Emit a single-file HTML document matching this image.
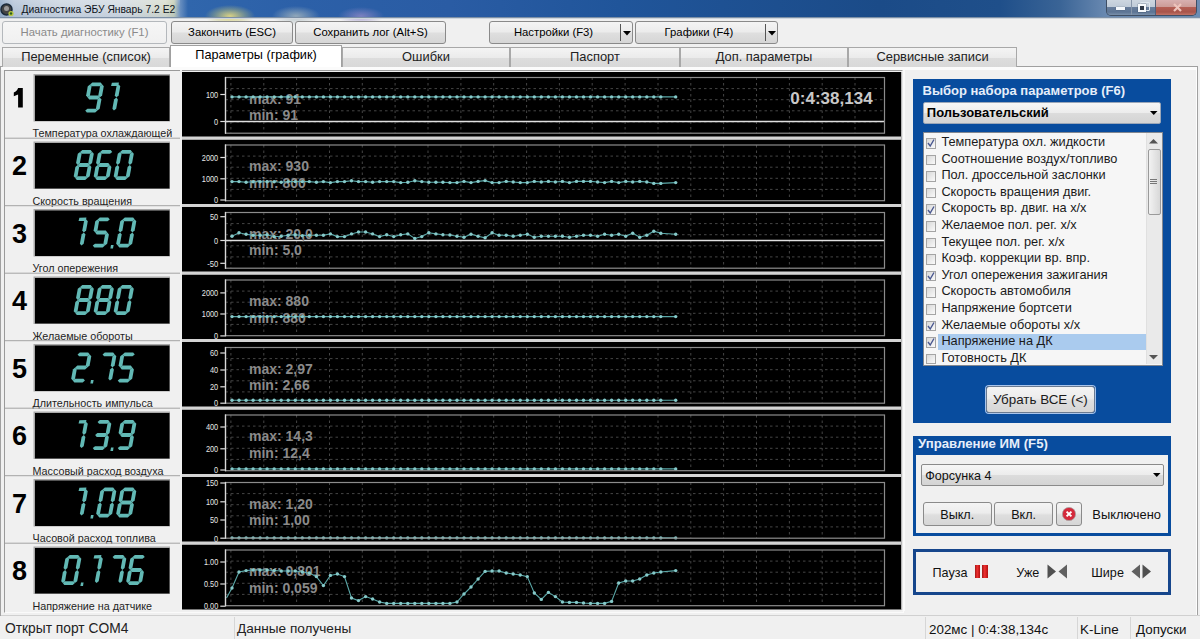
<!DOCTYPE html><html><head><meta charset="utf-8"><style>
html,body{margin:0;padding:0;}
body{width:1200px;height:639px;position:relative;overflow:hidden;background:#f0f0f0;font-family:"Liberation Sans",sans-serif;}
.b{position:absolute;box-sizing:content-box;}
.t{position:absolute;white-space:nowrap;}
</style></head><body>
<div class="b" style="left:0;top:0;width:1200px;height:18px;background:linear-gradient(90deg,#93acc9 0px,#b9c8da 14px,#cdd7e2 60px,#d5dde5 120px,#dadfd0 165px,#c8d0b8 174px,#6a90c0 180px,#3066ac 188px,#2c60a8 300px,#2a5ca4 450px,#20559a 620px,#1b4b88 880px,#1f4f8a 1000px,#3a6496 1060px,#6888b0 1105px,#6c8cb2 1200px);"></div>
<div class="b" style="left:0;top:0;width:180px;height:18px;background:linear-gradient(rgba(255,255,255,0.15),rgba(255,255,255,0) 40%,rgba(140,160,190,0.25));"></div>
<div class="b" style="left:205px;top:5px;width:50px;height:22px;background:radial-gradient(ellipse closest-side,rgba(225,215,130,0.95),rgba(200,200,120,0.4) 60%,rgba(200,200,120,0) 100%);"></div>
<div class="b" style="left:272px;top:6px;width:48px;height:20px;background:radial-gradient(ellipse closest-side,rgba(170,185,190,0.8),rgba(160,175,185,0) 100%);"></div>
<div class="b" style="left:338px;top:7px;width:46px;height:18px;background:radial-gradient(ellipse closest-side,rgba(150,140,200,0.75),rgba(150,140,200,0) 100%);"></div>
<div class="b" style="left:0;top:17px;width:1200px;height:1px;background:#7d90a6;"></div>
<div class="b" style="left:0;top:18px;width:1200px;height:1px;background:#cfd6de;"></div>
<svg class="b" style="left:0;top:3px" width="16" height="14"><circle cx="6.5" cy="6.5" r="5.5" fill="#444" stroke="#1a2a3a" stroke-width="1.5"/><circle cx="6.5" cy="5.5" r="2.5" fill="#9a9a9a"/><circle cx="11" cy="10.5" r="2.6" fill="#b8c840"/><circle cx="11" cy="10.5" r="1.2" fill="#2e5e20"/></svg>
<div class="t" style="left:21.5px;top:5.18px;font-size:10.3px;line-height:10.3px;color:#0c121a;font-weight:normal;">Диагностика ЭБУ Январь 7.2 E2</div>
<div class="b" style="left:1106px;top:0;width:89px;height:15px;border:1px solid #3e4e64;border-top:none;border-radius:0 0 5px 5px;overflow:hidden;background:#6080a0">
<div class="b" style="left:0;top:0;width:24px;height:15px;background:linear-gradient(#cdd6e0 0,#bfcbd8 45%,#687e9c 50%,#5c7494 80%,#7a90aa 100%);border-right:1px solid #8796aa"></div>
<div class="b" style="left:25px;top:0;width:23px;height:15px;background:linear-gradient(#cdd6e0 0,#bfcbd8 45%,#687e9c 50%,#5c7494 80%,#7a90aa 100%);border-right:1px solid #50607a"></div>
<div class="b" style="left:49px;top:0;width:40px;height:15px;background:linear-gradient(#d8b0b0 0,#cc9c98 45%,#b45e54 50%,#a8544a 80%,#c07468 100%);"></div>
<div class="b" style="left:9px;top:7px;width:9px;height:3px;background:#f4f8fc;box-shadow:0 0 1px #203040"></div>
<div class="b" style="left:33px;top:2px;width:8px;height:7px;border:1px solid #dde6ee;border-radius:1px"></div>
<div class="b" style="left:31px;top:4px;width:4px;height:4px;border:2px solid #f6f9fc;background:#303a48;box-shadow:0 0 1px #203040"></div>
<svg class="b" style="left:66px;top:3px" width="9" height="9"><path d="M1 1L8 8M8 1L1 8" stroke="#eec4bc" stroke-width="2.2"/></svg>
</div>
<div class="b" style="left:2px;top:21px;width:163px;height:21px;border-radius:3px;border:1px solid #b4b8bc;background:linear-gradient(#f6f6f6,#f0f0f0);"></div>
<div class="t" style="left:2px;top:25.7px;width:165px;text-align:center;font-size:11.3px;line-height:13.0px;color:#8a8a8a">Начать диагностику (F1)</div>
<div class="b" style="left:171px;top:21px;width:120px;height:21px;border-radius:3px;border:1px solid #8a8a8a;background:linear-gradient(#f4f4f4 0,#ececec 45%,#dedede 55%,#d6d6d6 100%);"></div>
<div class="t" style="left:171px;top:25.7px;width:122px;text-align:center;font-size:11.3px;line-height:13.0px;color:#000">Закончить (ESC)</div>
<div class="b" style="left:295px;top:21px;width:149px;height:21px;border-radius:3px;border:1px solid #8a8a8a;background:linear-gradient(#f4f4f4 0,#ececec 45%,#dedede 55%,#d6d6d6 100%);"></div>
<div class="t" style="left:295px;top:25.7px;width:151px;text-align:center;font-size:11.3px;line-height:13.0px;color:#000">Сохранить лог (Alt+S)</div>
<div class="b" style="left:489px;top:21px;width:142px;height:21px;border-radius:3px;border:1px solid #8a8a8a;background:linear-gradient(#f4f4f4 0,#ececec 45%,#dedede 55%,#d6d6d6 100%);"></div>
<div class="t" style="left:489px;top:25.7px;width:129px;text-align:center;font-size:11.3px;line-height:13.0px;color:#000">Настройки (F3)</div>
<div class="b" style="left:620px;top:24px;width:1px;height:17px;background:#555"></div>
<svg class="b" style="left:623px;top:30.5px" width="8" height="5"><path d="M0 0H8L4 4.5Z" fill="#000"/></svg>
<div class="b" style="left:635px;top:21px;width:141px;height:21px;border-radius:3px;border:1px solid #8a8a8a;background:linear-gradient(#f4f4f4 0,#ececec 45%,#dedede 55%,#d6d6d6 100%);"></div>
<div class="t" style="left:635px;top:25.7px;width:128px;text-align:center;font-size:11.3px;line-height:13.0px;color:#000">Графики (F4)</div>
<div class="b" style="left:765px;top:24px;width:1px;height:17px;background:#555"></div>
<svg class="b" style="left:768px;top:30.5px" width="8" height="5"><path d="M0 0H8L4 4.5Z" fill="#000"/></svg>
<div class="b" style="left:0;top:66px;width:1196px;height:548px;border:1px solid #a0a0a0;background:#fdfdfd;"></div>
<div class="b" style="left:2px;top:47px;width:166px;height:19px;border:1px solid #a8a8a8;border-bottom:none;background:linear-gradient(#f4f4f4 0,#ebebeb 50%,#dddddd 51%,#d8d8d8 100%);"></div>
<div class="t" style="left:2px;top:49px;width:168px;text-align:center;font-size:12.9px;line-height:15px;color:#222">Переменные (список)</div>
<div class="b" style="left:170px;top:45px;width:170px;height:23px;border:1px solid #a0a0a0;border-bottom:none;background:#fff;"></div>
<div class="t" style="left:170px;top:48px;width:172px;text-align:center;font-size:12.7px;line-height:15px;color:#000">Параметры (график)</div>
<div class="b" style="left:342px;top:47px;width:166px;height:19px;border:1px solid #a8a8a8;border-bottom:none;background:linear-gradient(#f4f4f4 0,#ebebeb 50%,#dddddd 51%,#d8d8d8 100%);"></div>
<div class="t" style="left:342px;top:49px;width:168px;text-align:center;font-size:12.9px;line-height:15px;color:#222">Ошибки</div>
<div class="b" style="left:510px;top:47px;width:168px;height:19px;border:1px solid #a8a8a8;border-bottom:none;background:linear-gradient(#f4f4f4 0,#ebebeb 50%,#dddddd 51%,#d8d8d8 100%);"></div>
<div class="t" style="left:510px;top:49px;width:170px;text-align:center;font-size:12.9px;line-height:15px;color:#222">Паспорт</div>
<div class="b" style="left:680px;top:47px;width:166px;height:19px;border:1px solid #a8a8a8;border-bottom:none;background:linear-gradient(#f4f4f4 0,#ebebeb 50%,#dddddd 51%,#d8d8d8 100%);"></div>
<div class="t" style="left:680px;top:49px;width:168px;text-align:center;font-size:12.9px;line-height:15px;color:#222">Доп. параметры</div>
<div class="b" style="left:848px;top:47px;width:167px;height:19px;border:1px solid #a8a8a8;border-bottom:none;background:linear-gradient(#f4f4f4 0,#ebebeb 50%,#dddddd 51%,#d8d8d8 100%);"></div>
<div class="t" style="left:848px;top:49px;width:169px;text-align:center;font-size:12.9px;line-height:15px;color:#222">Сервисные записи</div>
<div class="b" style="left:1px;top:67px;width:1195px;height:547px;background:#f0f0f0;border-top:3px solid #fbfbfb;"></div>
<div class="b" style="left:4px;top:70px;width:898px;height:541px;border-top:1px solid #9a9a9a;border-left:1px solid #9a9a9a;border-right:1px solid #fafafa;border-bottom:1px solid #fafafa;background:#f0f0f0;"></div>
<svg class="b" style="left:0;top:0" width="1200" height="639" font-family="Liberation Sans, sans-serif"><path d="M18.1,87.9 H22.8 V107.6 H18.1 V94.6 L13.8,96.2 V92.6 C16,91.6 17.4,90 18.1,87.9 Z" fill="#000"/><rect x="33.5" y="74.0" width="136.5" height="47.5" fill="#a8a8a8"/><rect x="35" y="75.5" width="134.5" height="45.5" fill="#000"/><polygon points="90.04,84.40 92.29,82.50 100.69,82.50 102.24,84.40 99.99,86.30 91.59,86.30" fill="#62b9b5"/><polygon points="102.24,84.40 103.79,86.30 102.09,95.60 99.84,97.50 98.29,95.60 99.99,86.30" fill="#62b9b5"/><polygon points="99.84,97.50 101.40,99.40 99.70,108.70 97.45,110.60 95.90,108.70 97.60,99.40" fill="#62b9b5"/><polygon points="85.25,110.60 87.50,108.70 95.90,108.70 97.45,110.60 95.20,112.50 86.80,112.50" fill="#62b9b5"/><polygon points="90.04,84.40 91.59,86.30 89.89,95.60 87.65,97.50 86.09,95.60 87.79,86.30" fill="#62b9b5"/><polygon points="87.65,97.50 89.89,95.60 98.29,95.60 99.84,97.50 97.60,99.40 89.20,99.40" fill="#62b9b5"/><polygon points="118.74,84.40 120.29,86.30 118.59,95.60 116.34,97.50 114.79,95.60 116.49,86.30" fill="#62b9b5"/><polygon points="116.34,97.50 117.90,99.40 116.20,108.70 113.95,110.60 112.40,108.70 114.10,99.40" fill="#62b9b5"/><polygon points="111.9,82.8 118.9,82.5 118.4,85.9 111.1,86.1" fill="#62b9b5"/><text x="32.5" y="137.0" font-size="10.75" fill="#1e1e1e">Температура охлаждающей</text><rect x="182" y="72.0" width="719" height="65" fill="#000"/><rect x="5" y="137.7" width="177" height="1" fill="#a4a4a4"/><text x="19.5" y="175.3" text-anchor="middle" font-size="27" font-weight="bold" fill="#000">2</text><rect x="33.5" y="141.5" width="136.5" height="47.5" fill="#a8a8a8"/><rect x="35" y="143.0" width="134.5" height="45.5" fill="#000"/><polygon points="80.04,151.90 82.29,150.00 90.69,150.00 92.24,151.90 89.99,153.80 81.59,153.80" fill="#62b9b5"/><polygon points="92.24,151.90 93.79,153.80 92.09,163.10 89.84,165.00 88.29,163.10 89.99,153.80" fill="#62b9b5"/><polygon points="89.84,165.00 91.40,166.90 89.70,176.20 87.45,178.10 85.90,176.20 87.60,166.90" fill="#62b9b5"/><polygon points="75.25,178.10 77.50,176.20 85.90,176.20 87.45,178.10 85.20,180.00 76.80,180.00" fill="#62b9b5"/><polygon points="77.65,165.00 79.20,166.90 77.50,176.20 75.25,178.10 73.70,176.20 75.40,166.90" fill="#62b9b5"/><polygon points="80.04,151.90 81.59,153.80 79.89,163.10 77.65,165.00 76.09,163.10 77.79,153.80" fill="#62b9b5"/><polygon points="77.65,165.00 79.89,163.10 88.29,163.10 89.84,165.00 87.60,166.90 79.20,166.90" fill="#62b9b5"/><polygon points="100.04,151.90 102.29,150.00 110.69,150.00 112.24,151.90 109.99,153.80 101.59,153.80" fill="#62b9b5"/><polygon points="100.04,151.90 101.59,153.80 99.89,163.10 97.65,165.00 96.09,163.10 97.79,153.80" fill="#62b9b5"/><polygon points="97.65,165.00 99.89,163.10 108.29,163.10 109.84,165.00 107.60,166.90 99.20,166.90" fill="#62b9b5"/><polygon points="97.65,165.00 99.20,166.90 97.50,176.20 95.25,178.10 93.70,176.20 95.40,166.90" fill="#62b9b5"/><polygon points="95.25,178.10 97.50,176.20 105.90,176.20 107.45,178.10 105.20,180.00 96.80,180.00" fill="#62b9b5"/><polygon points="109.84,165.00 111.40,166.90 109.70,176.20 107.45,178.10 105.90,176.20 107.60,166.90" fill="#62b9b5"/><polygon points="120.04,151.90 122.29,150.00 130.69,150.00 132.24,151.90 129.99,153.80 121.59,153.80" fill="#62b9b5"/><polygon points="132.24,151.90 133.79,153.80 132.09,163.10 129.84,165.00 128.29,163.10 129.99,153.80" fill="#62b9b5"/><polygon points="129.84,165.00 131.40,166.90 129.70,176.20 127.45,178.10 125.90,176.20 127.60,166.90" fill="#62b9b5"/><polygon points="115.25,178.10 117.50,176.20 125.90,176.20 127.45,178.10 125.20,180.00 116.80,180.00" fill="#62b9b5"/><polygon points="117.65,165.00 119.20,166.90 117.50,176.20 115.25,178.10 113.70,176.20 115.40,166.90" fill="#62b9b5"/><polygon points="120.04,151.90 121.59,153.80 119.89,163.10 117.65,165.00 116.09,163.10 117.79,153.80" fill="#62b9b5"/><text x="32.5" y="204.5" font-size="10.75" fill="#1e1e1e">Скорость вращения</text><rect x="182" y="139.5" width="719" height="65" fill="#000"/><rect x="5" y="205.2" width="177" height="1" fill="#a4a4a4"/><text x="19.5" y="242.8" text-anchor="middle" font-size="27" font-weight="bold" fill="#000">3</text><rect x="33.5" y="209.0" width="136.5" height="47.5" fill="#a8a8a8"/><rect x="35" y="210.5" width="134.5" height="45.5" fill="#000"/><polygon points="86.24,219.40 87.79,221.30 86.09,230.60 83.84,232.50 82.29,230.60 83.99,221.30" fill="#62b9b5"/><polygon points="83.84,232.50 85.40,234.40 83.70,243.70 81.45,245.60 79.90,243.70 81.60,234.40" fill="#62b9b5"/><polygon points="79.4,217.8 86.4,217.5 85.9,220.9 78.6,221.1" fill="#62b9b5"/><polygon points="97.54,219.40 99.79,217.50 108.19,217.50 109.74,219.40 107.49,221.30 99.09,221.30" fill="#62b9b5"/><polygon points="97.54,219.40 99.09,221.30 97.39,230.60 95.15,232.50 93.59,230.60 95.29,221.30" fill="#62b9b5"/><polygon points="95.15,232.50 97.39,230.60 105.79,230.60 107.34,232.50 105.10,234.40 96.70,234.40" fill="#62b9b5"/><polygon points="107.34,232.50 108.90,234.40 107.20,243.70 104.95,245.60 103.40,243.70 105.10,234.40" fill="#62b9b5"/><polygon points="92.75,245.60 95.00,243.70 103.40,243.70 104.95,245.60 102.70,247.50 94.30,247.50" fill="#62b9b5"/><polygon points="111.0,245.0 113.6,245.0 113.0,248.5 110.4,248.5" fill="#62b9b5"/><polygon points="122.54,219.40 124.79,217.50 133.19,217.50 134.74,219.40 132.49,221.30 124.09,221.30" fill="#62b9b5"/><polygon points="134.74,219.40 136.29,221.30 134.59,230.60 132.34,232.50 130.79,230.60 132.49,221.30" fill="#62b9b5"/><polygon points="132.34,232.50 133.90,234.40 132.20,243.70 129.95,245.60 128.40,243.70 130.10,234.40" fill="#62b9b5"/><polygon points="117.75,245.60 120.00,243.70 128.40,243.70 129.95,245.60 127.70,247.50 119.30,247.50" fill="#62b9b5"/><polygon points="120.15,232.50 121.70,234.40 120.00,243.70 117.75,245.60 116.20,243.70 117.90,234.40" fill="#62b9b5"/><polygon points="122.54,219.40 124.09,221.30 122.39,230.60 120.15,232.50 118.59,230.60 120.29,221.30" fill="#62b9b5"/><text x="32.5" y="272.0" font-size="10.75" fill="#1e1e1e">Угол опережения</text><rect x="182" y="207.0" width="719" height="65" fill="#000"/><rect x="5" y="272.7" width="177" height="1" fill="#a4a4a4"/><text x="19.5" y="310.3" text-anchor="middle" font-size="27" font-weight="bold" fill="#000">4</text><rect x="33.5" y="276.5" width="136.5" height="47.5" fill="#a8a8a8"/><rect x="35" y="278.0" width="134.5" height="45.5" fill="#000"/><polygon points="80.04,286.90 82.29,285.00 90.69,285.00 92.24,286.90 89.99,288.80 81.59,288.80" fill="#62b9b5"/><polygon points="92.24,286.90 93.79,288.80 92.09,298.10 89.84,300.00 88.29,298.10 89.99,288.80" fill="#62b9b5"/><polygon points="89.84,300.00 91.40,301.90 89.70,311.20 87.45,313.10 85.90,311.20 87.60,301.90" fill="#62b9b5"/><polygon points="75.25,313.10 77.50,311.20 85.90,311.20 87.45,313.10 85.20,315.00 76.80,315.00" fill="#62b9b5"/><polygon points="77.65,300.00 79.20,301.90 77.50,311.20 75.25,313.10 73.70,311.20 75.40,301.90" fill="#62b9b5"/><polygon points="80.04,286.90 81.59,288.80 79.89,298.10 77.65,300.00 76.09,298.10 77.79,288.80" fill="#62b9b5"/><polygon points="77.65,300.00 79.89,298.10 88.29,298.10 89.84,300.00 87.60,301.90 79.20,301.90" fill="#62b9b5"/><polygon points="100.04,286.90 102.29,285.00 110.69,285.00 112.24,286.90 109.99,288.80 101.59,288.80" fill="#62b9b5"/><polygon points="112.24,286.90 113.79,288.80 112.09,298.10 109.84,300.00 108.29,298.10 109.99,288.80" fill="#62b9b5"/><polygon points="109.84,300.00 111.40,301.90 109.70,311.20 107.45,313.10 105.90,311.20 107.60,301.90" fill="#62b9b5"/><polygon points="95.25,313.10 97.50,311.20 105.90,311.20 107.45,313.10 105.20,315.00 96.80,315.00" fill="#62b9b5"/><polygon points="97.65,300.00 99.20,301.90 97.50,311.20 95.25,313.10 93.70,311.20 95.40,301.90" fill="#62b9b5"/><polygon points="100.04,286.90 101.59,288.80 99.89,298.10 97.65,300.00 96.09,298.10 97.79,288.80" fill="#62b9b5"/><polygon points="97.65,300.00 99.89,298.10 108.29,298.10 109.84,300.00 107.60,301.90 99.20,301.90" fill="#62b9b5"/><polygon points="120.04,286.90 122.29,285.00 130.69,285.00 132.24,286.90 129.99,288.80 121.59,288.80" fill="#62b9b5"/><polygon points="132.24,286.90 133.79,288.80 132.09,298.10 129.84,300.00 128.29,298.10 129.99,288.80" fill="#62b9b5"/><polygon points="129.84,300.00 131.40,301.90 129.70,311.20 127.45,313.10 125.90,311.20 127.60,301.90" fill="#62b9b5"/><polygon points="115.25,313.10 117.50,311.20 125.90,311.20 127.45,313.10 125.20,315.00 116.80,315.00" fill="#62b9b5"/><polygon points="117.65,300.00 119.20,301.90 117.50,311.20 115.25,313.10 113.70,311.20 115.40,301.90" fill="#62b9b5"/><polygon points="120.04,286.90 121.59,288.80 119.89,298.10 117.65,300.00 116.09,298.10 117.79,288.80" fill="#62b9b5"/><text x="32.5" y="339.5" font-size="10.75" fill="#1e1e1e">Желаемые обороты</text><rect x="182" y="274.5" width="719" height="65" fill="#000"/><rect x="5" y="340.2" width="177" height="1" fill="#a4a4a4"/><text x="19.5" y="377.8" text-anchor="middle" font-size="27" font-weight="bold" fill="#000">5</text><rect x="33.5" y="344.0" width="136.5" height="47.5" fill="#a8a8a8"/><rect x="35" y="345.5" width="134.5" height="45.5" fill="#000"/><polygon points="77.54,354.40 79.79,352.50 88.19,352.50 89.74,354.40 87.49,356.30 79.09,356.30" fill="#62b9b5"/><polygon points="89.74,354.40 91.29,356.30 89.59,365.60 87.34,367.50 85.79,365.60 87.49,356.30" fill="#62b9b5"/><polygon points="75.15,367.50 77.39,365.60 85.79,365.60 87.34,367.50 85.10,369.40 76.70,369.40" fill="#62b9b5"/><polygon points="75.15,367.50 76.70,369.40 75.00,378.70 72.75,380.60 71.20,378.70 72.90,369.40" fill="#62b9b5"/><polygon points="72.75,380.60 75.00,378.70 83.40,378.70 84.95,380.60 82.70,382.50 74.30,382.50" fill="#62b9b5"/><polygon points="91.0,380.0 93.6,380.0 93.0,383.5 90.4,383.5" fill="#62b9b5"/><polygon points="102.54,354.40 104.79,352.50 113.19,352.50 114.74,354.40 112.49,356.30 104.09,356.30" fill="#62b9b5"/><polygon points="114.74,354.40 116.29,356.30 114.59,365.60 112.34,367.50 110.79,365.60 112.49,356.30" fill="#62b9b5"/><polygon points="112.34,367.50 113.90,369.40 112.20,378.70 109.95,380.60 108.40,378.70 110.10,369.40" fill="#62b9b5"/><polygon points="122.54,354.40 124.79,352.50 133.19,352.50 134.74,354.40 132.49,356.30 124.09,356.30" fill="#62b9b5"/><polygon points="122.54,354.40 124.09,356.30 122.39,365.60 120.15,367.50 118.59,365.60 120.29,356.30" fill="#62b9b5"/><polygon points="120.15,367.50 122.39,365.60 130.79,365.60 132.34,367.50 130.10,369.40 121.70,369.40" fill="#62b9b5"/><polygon points="132.34,367.50 133.90,369.40 132.20,378.70 129.95,380.60 128.40,378.70 130.10,369.40" fill="#62b9b5"/><polygon points="117.75,380.60 120.00,378.70 128.40,378.70 129.95,380.60 127.70,382.50 119.30,382.50" fill="#62b9b5"/><text x="32.5" y="407.0" font-size="10.75" fill="#1e1e1e">Длительность импульса</text><rect x="182" y="342.0" width="719" height="65" fill="#000"/><rect x="5" y="407.7" width="177" height="1" fill="#a4a4a4"/><text x="19.5" y="445.3" text-anchor="middle" font-size="27" font-weight="bold" fill="#000">6</text><rect x="33.5" y="411.5" width="136.5" height="47.5" fill="#a8a8a8"/><rect x="35" y="413.0" width="134.5" height="45.5" fill="#000"/><polygon points="86.24,421.90 87.79,423.80 86.09,433.10 83.84,435.00 82.29,433.10 83.99,423.80" fill="#62b9b5"/><polygon points="83.84,435.00 85.40,436.90 83.70,446.20 81.45,448.10 79.90,446.20 81.60,436.90" fill="#62b9b5"/><polygon points="79.4,420.3 86.4,420.0 85.9,423.4 78.6,423.6" fill="#62b9b5"/><polygon points="97.54,421.90 99.79,420.00 108.19,420.00 109.74,421.90 107.49,423.80 99.09,423.80" fill="#62b9b5"/><polygon points="109.74,421.90 111.29,423.80 109.59,433.10 107.34,435.00 105.79,433.10 107.49,423.80" fill="#62b9b5"/><polygon points="95.15,435.00 97.39,433.10 105.79,433.10 107.34,435.00 105.10,436.90 96.70,436.90" fill="#62b9b5"/><polygon points="107.34,435.00 108.90,436.90 107.20,446.20 104.95,448.10 103.40,446.20 105.10,436.90" fill="#62b9b5"/><polygon points="92.75,448.10 95.00,446.20 103.40,446.20 104.95,448.10 102.70,450.00 94.30,450.00" fill="#62b9b5"/><polygon points="111.0,447.5 113.6,447.5 113.0,451.0 110.4,451.0" fill="#62b9b5"/><polygon points="122.54,421.90 124.79,420.00 133.19,420.00 134.74,421.90 132.49,423.80 124.09,423.80" fill="#62b9b5"/><polygon points="134.74,421.90 136.29,423.80 134.59,433.10 132.34,435.00 130.79,433.10 132.49,423.80" fill="#62b9b5"/><polygon points="132.34,435.00 133.90,436.90 132.20,446.20 129.95,448.10 128.40,446.20 130.10,436.90" fill="#62b9b5"/><polygon points="117.75,448.10 120.00,446.20 128.40,446.20 129.95,448.10 127.70,450.00 119.30,450.00" fill="#62b9b5"/><polygon points="122.54,421.90 124.09,423.80 122.39,433.10 120.15,435.00 118.59,433.10 120.29,423.80" fill="#62b9b5"/><polygon points="120.15,435.00 122.39,433.10 130.79,433.10 132.34,435.00 130.10,436.90 121.70,436.90" fill="#62b9b5"/><text x="32.5" y="474.5" font-size="10.75" fill="#1e1e1e">Массовый расход воздуха</text><rect x="182" y="409.5" width="719" height="65" fill="#000"/><rect x="5" y="475.2" width="177" height="1" fill="#a4a4a4"/><text x="19.5" y="512.8" text-anchor="middle" font-size="27" font-weight="bold" fill="#000">7</text><rect x="33.5" y="479.0" width="136.5" height="47.5" fill="#a8a8a8"/><rect x="35" y="480.5" width="134.5" height="45.5" fill="#000"/><polygon points="86.24,489.40 87.79,491.30 86.09,500.60 83.84,502.50 82.29,500.60 83.99,491.30" fill="#62b9b5"/><polygon points="83.84,502.50 85.40,504.40 83.70,513.70 81.45,515.60 79.90,513.70 81.60,504.40" fill="#62b9b5"/><polygon points="79.4,487.8 86.4,487.5 85.9,490.9 78.6,491.1" fill="#62b9b5"/><polygon points="91.0,515.0 93.6,515.0 93.0,518.5 90.4,518.5" fill="#62b9b5"/><polygon points="102.54,489.40 104.79,487.50 113.19,487.50 114.74,489.40 112.49,491.30 104.09,491.30" fill="#62b9b5"/><polygon points="114.74,489.40 116.29,491.30 114.59,500.60 112.34,502.50 110.79,500.60 112.49,491.30" fill="#62b9b5"/><polygon points="112.34,502.50 113.90,504.40 112.20,513.70 109.95,515.60 108.40,513.70 110.10,504.40" fill="#62b9b5"/><polygon points="97.75,515.60 100.00,513.70 108.40,513.70 109.95,515.60 107.70,517.50 99.30,517.50" fill="#62b9b5"/><polygon points="100.15,502.50 101.70,504.40 100.00,513.70 97.75,515.60 96.20,513.70 97.90,504.40" fill="#62b9b5"/><polygon points="102.54,489.40 104.09,491.30 102.39,500.60 100.15,502.50 98.59,500.60 100.29,491.30" fill="#62b9b5"/><polygon points="122.54,489.40 124.79,487.50 133.19,487.50 134.74,489.40 132.49,491.30 124.09,491.30" fill="#62b9b5"/><polygon points="134.74,489.40 136.29,491.30 134.59,500.60 132.34,502.50 130.79,500.60 132.49,491.30" fill="#62b9b5"/><polygon points="132.34,502.50 133.90,504.40 132.20,513.70 129.95,515.60 128.40,513.70 130.10,504.40" fill="#62b9b5"/><polygon points="117.75,515.60 120.00,513.70 128.40,513.70 129.95,515.60 127.70,517.50 119.30,517.50" fill="#62b9b5"/><polygon points="120.15,502.50 121.70,504.40 120.00,513.70 117.75,515.60 116.20,513.70 117.90,504.40" fill="#62b9b5"/><polygon points="122.54,489.40 124.09,491.30 122.39,500.60 120.15,502.50 118.59,500.60 120.29,491.30" fill="#62b9b5"/><polygon points="120.15,502.50 122.39,500.60 130.79,500.60 132.34,502.50 130.10,504.40 121.70,504.40" fill="#62b9b5"/><text x="32.5" y="542.0" font-size="10.75" fill="#1e1e1e">Часовой расход топлива</text><rect x="182" y="477.0" width="719" height="65" fill="#000"/><rect x="5" y="542.7" width="177" height="1" fill="#a4a4a4"/><text x="19.5" y="580.3" text-anchor="middle" font-size="27" font-weight="bold" fill="#000">8</text><rect x="33.5" y="546.5" width="136.5" height="47.5" fill="#a8a8a8"/><rect x="35" y="548.0" width="134.5" height="45.5" fill="#000"/><polygon points="67.54,556.90 69.79,555.00 78.19,555.00 79.74,556.90 77.49,558.80 69.09,558.80" fill="#62b9b5"/><polygon points="79.74,556.90 81.29,558.80 79.59,568.10 77.34,570.00 75.79,568.10 77.49,558.80" fill="#62b9b5"/><polygon points="77.34,570.00 78.90,571.90 77.20,581.20 74.95,583.10 73.40,581.20 75.10,571.90" fill="#62b9b5"/><polygon points="62.75,583.10 65.00,581.20 73.40,581.20 74.95,583.10 72.70,585.00 64.30,585.00" fill="#62b9b5"/><polygon points="65.14,570.00 66.70,571.90 65.00,581.20 62.75,583.10 61.20,581.20 62.90,571.90" fill="#62b9b5"/><polygon points="67.54,556.90 69.09,558.80 67.39,568.10 65.14,570.00 63.59,568.10 65.29,558.80" fill="#62b9b5"/><polygon points="81.0,582.5 83.6,582.5 83.0,586.0 80.4,586.0" fill="#62b9b5"/><polygon points="101.24,556.90 102.79,558.80 101.09,568.10 98.84,570.00 97.29,568.10 98.99,558.80" fill="#62b9b5"/><polygon points="98.84,570.00 100.40,571.90 98.70,581.20 96.45,583.10 94.90,581.20 96.60,571.90" fill="#62b9b5"/><polygon points="94.4,555.3 101.4,555.0 100.9,558.4 93.6,558.6" fill="#62b9b5"/><polygon points="112.54,556.90 114.79,555.00 123.19,555.00 124.74,556.90 122.49,558.80 114.09,558.80" fill="#62b9b5"/><polygon points="124.74,556.90 126.29,558.80 124.59,568.10 122.34,570.00 120.79,568.10 122.49,558.80" fill="#62b9b5"/><polygon points="122.34,570.00 123.90,571.90 122.20,581.20 119.95,583.10 118.40,581.20 120.10,571.90" fill="#62b9b5"/><polygon points="132.54,556.90 134.79,555.00 143.19,555.00 144.74,556.90 142.49,558.80 134.09,558.80" fill="#62b9b5"/><polygon points="132.54,556.90 134.09,558.80 132.39,568.10 130.15,570.00 128.59,568.10 130.29,558.80" fill="#62b9b5"/><polygon points="130.15,570.00 132.39,568.10 140.79,568.10 142.34,570.00 140.10,571.90 131.70,571.90" fill="#62b9b5"/><polygon points="130.15,570.00 131.70,571.90 130.00,581.20 127.75,583.10 126.20,581.20 127.90,571.90" fill="#62b9b5"/><polygon points="127.75,583.10 130.00,581.20 138.40,581.20 139.95,583.10 137.70,585.00 129.30,585.00" fill="#62b9b5"/><polygon points="142.34,570.00 143.90,571.90 142.20,581.20 139.95,583.10 138.40,581.20 140.10,571.90" fill="#62b9b5"/><text x="32.5" y="609.5" font-size="10.75" fill="#1e1e1e">Напряжение на датчике</text><rect x="182" y="544.5" width="719" height="65" fill="#000"/><line x1="225.5" y1="88.6" x2="884.5" y2="88.6" stroke="#454545" stroke-width="1" stroke-dasharray="2.5,3"/><line x1="225.5" y1="99.7" x2="884.5" y2="99.7" stroke="#454545" stroke-width="1" stroke-dasharray="2.5,3"/><line x1="225.5" y1="110.8" x2="884.5" y2="110.8" stroke="#454545" stroke-width="1" stroke-dasharray="2.5,3"/><line x1="225.5" y1="121.9" x2="884.5" y2="121.9" stroke="#454545" stroke-width="1" stroke-dasharray="2.5,3"/><line x1="230.9" y1="77.5" x2="230.9" y2="133.2" stroke="#454545" stroke-width="1" stroke-dasharray="2.5,3"/><line x1="263.8" y1="77.5" x2="263.8" y2="133.2" stroke="#454545" stroke-width="1" stroke-dasharray="2.5,3"/><line x1="296.6" y1="77.5" x2="296.6" y2="133.2" stroke="#454545" stroke-width="1" stroke-dasharray="2.5,3"/><line x1="329.5" y1="77.5" x2="329.5" y2="133.2" stroke="#454545" stroke-width="1" stroke-dasharray="2.5,3"/><line x1="362.3" y1="77.5" x2="362.3" y2="133.2" stroke="#454545" stroke-width="1" stroke-dasharray="2.5,3"/><line x1="395.1" y1="77.5" x2="395.1" y2="133.2" stroke="#454545" stroke-width="1" stroke-dasharray="2.5,3"/><line x1="428.0" y1="77.5" x2="428.0" y2="133.2" stroke="#454545" stroke-width="1" stroke-dasharray="2.5,3"/><line x1="460.9" y1="77.5" x2="460.9" y2="133.2" stroke="#454545" stroke-width="1" stroke-dasharray="2.5,3"/><line x1="493.7" y1="77.5" x2="493.7" y2="133.2" stroke="#454545" stroke-width="1" stroke-dasharray="2.5,3"/><line x1="526.6" y1="77.5" x2="526.6" y2="133.2" stroke="#454545" stroke-width="1" stroke-dasharray="2.5,3"/><line x1="559.4" y1="77.5" x2="559.4" y2="133.2" stroke="#454545" stroke-width="1" stroke-dasharray="2.5,3"/><line x1="592.2" y1="77.5" x2="592.2" y2="133.2" stroke="#454545" stroke-width="1" stroke-dasharray="2.5,3"/><line x1="625.1" y1="77.5" x2="625.1" y2="133.2" stroke="#454545" stroke-width="1" stroke-dasharray="2.5,3"/><line x1="658.0" y1="77.5" x2="658.0" y2="133.2" stroke="#454545" stroke-width="1" stroke-dasharray="2.5,3"/><line x1="690.8" y1="77.5" x2="690.8" y2="133.2" stroke="#454545" stroke-width="1" stroke-dasharray="2.5,3"/><line x1="723.6" y1="77.5" x2="723.6" y2="133.2" stroke="#454545" stroke-width="1" stroke-dasharray="2.5,3"/><line x1="756.5" y1="77.5" x2="756.5" y2="133.2" stroke="#454545" stroke-width="1" stroke-dasharray="2.5,3"/><line x1="789.4" y1="77.5" x2="789.4" y2="133.2" stroke="#454545" stroke-width="1" stroke-dasharray="2.5,3"/><line x1="822.2" y1="77.5" x2="822.2" y2="133.2" stroke="#454545" stroke-width="1" stroke-dasharray="2.5,3"/><line x1="855.0" y1="77.5" x2="855.0" y2="133.2" stroke="#454545" stroke-width="1" stroke-dasharray="2.5,3"/><line x1="225.5" y1="121.5" x2="884.5" y2="121.5" stroke="#e0e0e0" stroke-width="1.3"/><line x1="220.3" y1="94.5" x2="225.5" y2="94.5" stroke="#e0e0e0" stroke-width="1.2"/><text x="205.9" y="97.7" font-size="8.6" fill="#e8e8e8" textLength="12.3" lengthAdjust="spacingAndGlyphs">100</text><line x1="220.3" y1="121.5" x2="225.5" y2="121.5" stroke="#e0e0e0" stroke-width="1.2"/><text x="214.1" y="124.7" font-size="8.6" fill="#e8e8e8" textLength="4.1" lengthAdjust="spacingAndGlyphs">0</text><text x="249" y="103.6" font-size="14" font-weight="bold" fill="#8a8a8a">max: 91</text><text x="249" y="120.4" font-size="14" font-weight="bold" fill="#8a8a8a">min: 91</text><polyline points="232.0,96.9 239.0,96.9 246.1,96.9 253.1,96.9 260.1,96.9 267.1,96.9 274.2,96.9 281.2,96.9 288.2,96.9 295.3,96.9 302.3,96.9 309.3,96.9 316.4,96.9 323.4,96.9 330.4,96.9 337.4,96.9 344.5,96.9 351.5,96.9 358.5,96.9 365.6,96.9 372.6,96.9 379.6,96.9 386.7,96.9 393.7,96.9 400.7,96.9 407.8,96.9 414.8,96.9 421.8,96.9 428.8,96.9 435.9,96.9 442.9,96.9 449.9,96.9 457.0,96.9 464.0,96.9 471.0,96.9 478.1,96.9 485.1,96.9 492.1,96.9 499.1,96.9 506.2,96.9 513.2,96.9 520.2,96.9 527.3,96.9 534.3,96.9 541.3,96.9 548.4,96.9 555.4,96.9 562.4,96.9 569.4,96.9 576.5,96.9 583.5,96.9 590.5,96.9 597.6,96.9 604.6,96.9 611.6,96.9 618.7,96.9 625.7,96.9 632.7,96.9 639.7,96.9 646.8,96.9 653.8,96.9 660.8,96.9 675.7,96.9" fill="none" stroke="#5aa8a8" stroke-width="1.1"/><circle cx="232.0" cy="96.9" r="1.7" fill="#86caca"/><circle cx="239.0" cy="96.9" r="1.7" fill="#86caca"/><circle cx="246.1" cy="96.9" r="1.7" fill="#86caca"/><circle cx="253.1" cy="96.9" r="1.7" fill="#86caca"/><circle cx="260.1" cy="96.9" r="1.7" fill="#86caca"/><circle cx="267.1" cy="96.9" r="1.7" fill="#86caca"/><circle cx="274.2" cy="96.9" r="1.7" fill="#86caca"/><circle cx="281.2" cy="96.9" r="1.7" fill="#86caca"/><circle cx="288.2" cy="96.9" r="1.7" fill="#86caca"/><circle cx="295.3" cy="96.9" r="1.7" fill="#86caca"/><circle cx="302.3" cy="96.9" r="1.7" fill="#86caca"/><circle cx="309.3" cy="96.9" r="1.7" fill="#86caca"/><circle cx="316.4" cy="96.9" r="1.7" fill="#86caca"/><circle cx="323.4" cy="96.9" r="1.7" fill="#86caca"/><circle cx="330.4" cy="96.9" r="1.7" fill="#86caca"/><circle cx="337.4" cy="96.9" r="1.7" fill="#86caca"/><circle cx="344.5" cy="96.9" r="1.7" fill="#86caca"/><circle cx="351.5" cy="96.9" r="1.7" fill="#86caca"/><circle cx="358.5" cy="96.9" r="1.7" fill="#86caca"/><circle cx="365.6" cy="96.9" r="1.7" fill="#86caca"/><circle cx="372.6" cy="96.9" r="1.7" fill="#86caca"/><circle cx="379.6" cy="96.9" r="1.7" fill="#86caca"/><circle cx="386.7" cy="96.9" r="1.7" fill="#86caca"/><circle cx="393.7" cy="96.9" r="1.7" fill="#86caca"/><circle cx="400.7" cy="96.9" r="1.7" fill="#86caca"/><circle cx="407.8" cy="96.9" r="1.7" fill="#86caca"/><circle cx="414.8" cy="96.9" r="1.7" fill="#86caca"/><circle cx="421.8" cy="96.9" r="1.7" fill="#86caca"/><circle cx="428.8" cy="96.9" r="1.7" fill="#86caca"/><circle cx="435.9" cy="96.9" r="1.7" fill="#86caca"/><circle cx="442.9" cy="96.9" r="1.7" fill="#86caca"/><circle cx="449.9" cy="96.9" r="1.7" fill="#86caca"/><circle cx="457.0" cy="96.9" r="1.7" fill="#86caca"/><circle cx="464.0" cy="96.9" r="1.7" fill="#86caca"/><circle cx="471.0" cy="96.9" r="1.7" fill="#86caca"/><circle cx="478.1" cy="96.9" r="1.7" fill="#86caca"/><circle cx="485.1" cy="96.9" r="1.7" fill="#86caca"/><circle cx="492.1" cy="96.9" r="1.7" fill="#86caca"/><circle cx="499.1" cy="96.9" r="1.7" fill="#86caca"/><circle cx="506.2" cy="96.9" r="1.7" fill="#86caca"/><circle cx="513.2" cy="96.9" r="1.7" fill="#86caca"/><circle cx="520.2" cy="96.9" r="1.7" fill="#86caca"/><circle cx="527.3" cy="96.9" r="1.7" fill="#86caca"/><circle cx="534.3" cy="96.9" r="1.7" fill="#86caca"/><circle cx="541.3" cy="96.9" r="1.7" fill="#86caca"/><circle cx="548.4" cy="96.9" r="1.7" fill="#86caca"/><circle cx="555.4" cy="96.9" r="1.7" fill="#86caca"/><circle cx="562.4" cy="96.9" r="1.7" fill="#86caca"/><circle cx="569.4" cy="96.9" r="1.7" fill="#86caca"/><circle cx="576.5" cy="96.9" r="1.7" fill="#86caca"/><circle cx="583.5" cy="96.9" r="1.7" fill="#86caca"/><circle cx="590.5" cy="96.9" r="1.7" fill="#86caca"/><circle cx="597.6" cy="96.9" r="1.7" fill="#86caca"/><circle cx="604.6" cy="96.9" r="1.7" fill="#86caca"/><circle cx="611.6" cy="96.9" r="1.7" fill="#86caca"/><circle cx="618.7" cy="96.9" r="1.7" fill="#86caca"/><circle cx="625.7" cy="96.9" r="1.7" fill="#86caca"/><circle cx="632.7" cy="96.9" r="1.7" fill="#86caca"/><circle cx="639.7" cy="96.9" r="1.7" fill="#86caca"/><circle cx="646.8" cy="96.9" r="1.7" fill="#86caca"/><circle cx="653.8" cy="96.9" r="1.7" fill="#86caca"/><circle cx="660.8" cy="96.9" r="1.7" fill="#86caca"/><circle cx="675.7" cy="96.9" r="1.7" fill="#86caca"/><rect x="225.5" y="77.5" width="659.0" height="55.7" fill="none" stroke="#8c8c8c" stroke-width="1.2"/><line x1="225.5" y1="76.9" x2="225.5" y2="133.79999999999998" stroke="#d8d8d8" stroke-width="1.3"/><line x1="225.5" y1="156.1" x2="884.5" y2="156.1" stroke="#454545" stroke-width="1" stroke-dasharray="2.5,3"/><line x1="225.5" y1="167.2" x2="884.5" y2="167.2" stroke="#454545" stroke-width="1" stroke-dasharray="2.5,3"/><line x1="225.5" y1="178.3" x2="884.5" y2="178.3" stroke="#454545" stroke-width="1" stroke-dasharray="2.5,3"/><line x1="225.5" y1="189.4" x2="884.5" y2="189.4" stroke="#454545" stroke-width="1" stroke-dasharray="2.5,3"/><line x1="230.9" y1="145.0" x2="230.9" y2="200.7" stroke="#454545" stroke-width="1" stroke-dasharray="2.5,3"/><line x1="263.8" y1="145.0" x2="263.8" y2="200.7" stroke="#454545" stroke-width="1" stroke-dasharray="2.5,3"/><line x1="296.6" y1="145.0" x2="296.6" y2="200.7" stroke="#454545" stroke-width="1" stroke-dasharray="2.5,3"/><line x1="329.5" y1="145.0" x2="329.5" y2="200.7" stroke="#454545" stroke-width="1" stroke-dasharray="2.5,3"/><line x1="362.3" y1="145.0" x2="362.3" y2="200.7" stroke="#454545" stroke-width="1" stroke-dasharray="2.5,3"/><line x1="395.1" y1="145.0" x2="395.1" y2="200.7" stroke="#454545" stroke-width="1" stroke-dasharray="2.5,3"/><line x1="428.0" y1="145.0" x2="428.0" y2="200.7" stroke="#454545" stroke-width="1" stroke-dasharray="2.5,3"/><line x1="460.9" y1="145.0" x2="460.9" y2="200.7" stroke="#454545" stroke-width="1" stroke-dasharray="2.5,3"/><line x1="493.7" y1="145.0" x2="493.7" y2="200.7" stroke="#454545" stroke-width="1" stroke-dasharray="2.5,3"/><line x1="526.6" y1="145.0" x2="526.6" y2="200.7" stroke="#454545" stroke-width="1" stroke-dasharray="2.5,3"/><line x1="559.4" y1="145.0" x2="559.4" y2="200.7" stroke="#454545" stroke-width="1" stroke-dasharray="2.5,3"/><line x1="592.2" y1="145.0" x2="592.2" y2="200.7" stroke="#454545" stroke-width="1" stroke-dasharray="2.5,3"/><line x1="625.1" y1="145.0" x2="625.1" y2="200.7" stroke="#454545" stroke-width="1" stroke-dasharray="2.5,3"/><line x1="658.0" y1="145.0" x2="658.0" y2="200.7" stroke="#454545" stroke-width="1" stroke-dasharray="2.5,3"/><line x1="690.8" y1="145.0" x2="690.8" y2="200.7" stroke="#454545" stroke-width="1" stroke-dasharray="2.5,3"/><line x1="723.6" y1="145.0" x2="723.6" y2="200.7" stroke="#454545" stroke-width="1" stroke-dasharray="2.5,3"/><line x1="756.5" y1="145.0" x2="756.5" y2="200.7" stroke="#454545" stroke-width="1" stroke-dasharray="2.5,3"/><line x1="789.4" y1="145.0" x2="789.4" y2="200.7" stroke="#454545" stroke-width="1" stroke-dasharray="2.5,3"/><line x1="822.2" y1="145.0" x2="822.2" y2="200.7" stroke="#454545" stroke-width="1" stroke-dasharray="2.5,3"/><line x1="855.0" y1="145.0" x2="855.0" y2="200.7" stroke="#454545" stroke-width="1" stroke-dasharray="2.5,3"/><line x1="220.3" y1="157.5" x2="225.5" y2="157.5" stroke="#e0e0e0" stroke-width="1.2"/><text x="201.8" y="160.7" font-size="8.6" fill="#e8e8e8" textLength="16.4" lengthAdjust="spacingAndGlyphs">2000</text><line x1="220.3" y1="178.8" x2="225.5" y2="178.8" stroke="#e0e0e0" stroke-width="1.2"/><text x="201.8" y="181.9" font-size="8.6" fill="#e8e8e8" textLength="16.4" lengthAdjust="spacingAndGlyphs">1000</text><line x1="220.3" y1="200.0" x2="225.5" y2="200.0" stroke="#e0e0e0" stroke-width="1.2"/><text x="214.1" y="203.2" font-size="8.6" fill="#e8e8e8" textLength="4.1" lengthAdjust="spacingAndGlyphs">0</text><text x="249" y="171.1" font-size="14" font-weight="bold" fill="#8a8a8a">max: 930</text><text x="249" y="187.9" font-size="14" font-weight="bold" fill="#8a8a8a">min: 800</text><polyline points="232.0,181.6 239.0,181.6 246.1,182.2 253.1,181.8 260.1,181.8 267.1,181.8 274.2,181.8 281.2,182.2 288.2,181.6 295.3,181.6 302.3,181.6 309.3,181.6 316.4,182.2 323.4,181.6 330.4,182.6 337.4,181.6 344.5,181.6 351.5,180.7 358.5,181.6 365.6,181.6 372.6,182.2 379.6,181.6 386.7,181.6 393.7,181.6 400.7,182.6 407.8,182.2 414.8,180.7 421.8,181.6 428.8,182.2 435.9,182.2 442.9,182.2 449.9,182.6 457.0,182.6 464.0,181.4 471.0,182.6 478.1,181.4 485.1,180.6 492.1,182.6 499.1,182.6 506.2,181.4 513.2,182.0 520.2,182.6 527.3,182.6 534.3,181.4 541.3,182.0 548.4,181.4 555.4,182.0 562.4,181.4 569.4,182.6 576.5,181.4 583.5,181.4 590.5,181.4 597.6,182.0 604.6,182.6 611.6,181.4 618.7,182.6 625.7,181.4 632.7,182.0 639.7,181.4 646.8,182.0 653.8,183.4 660.8,183.4 675.7,182.6" fill="none" stroke="#5aa8a8" stroke-width="1.1"/><circle cx="232.0" cy="181.6" r="1.7" fill="#86caca"/><circle cx="239.0" cy="181.6" r="1.7" fill="#86caca"/><circle cx="246.1" cy="182.2" r="1.7" fill="#86caca"/><circle cx="253.1" cy="181.8" r="1.7" fill="#86caca"/><circle cx="260.1" cy="181.8" r="1.7" fill="#86caca"/><circle cx="267.1" cy="181.8" r="1.7" fill="#86caca"/><circle cx="274.2" cy="181.8" r="1.7" fill="#86caca"/><circle cx="281.2" cy="182.2" r="1.7" fill="#86caca"/><circle cx="288.2" cy="181.6" r="1.7" fill="#86caca"/><circle cx="295.3" cy="181.6" r="1.7" fill="#86caca"/><circle cx="302.3" cy="181.6" r="1.7" fill="#86caca"/><circle cx="309.3" cy="181.6" r="1.7" fill="#86caca"/><circle cx="316.4" cy="182.2" r="1.7" fill="#86caca"/><circle cx="323.4" cy="181.6" r="1.7" fill="#86caca"/><circle cx="330.4" cy="182.6" r="1.7" fill="#86caca"/><circle cx="337.4" cy="181.6" r="1.7" fill="#86caca"/><circle cx="344.5" cy="181.6" r="1.7" fill="#86caca"/><circle cx="351.5" cy="180.7" r="1.7" fill="#86caca"/><circle cx="358.5" cy="181.6" r="1.7" fill="#86caca"/><circle cx="365.6" cy="181.6" r="1.7" fill="#86caca"/><circle cx="372.6" cy="182.2" r="1.7" fill="#86caca"/><circle cx="379.6" cy="181.6" r="1.7" fill="#86caca"/><circle cx="386.7" cy="181.6" r="1.7" fill="#86caca"/><circle cx="393.7" cy="181.6" r="1.7" fill="#86caca"/><circle cx="400.7" cy="182.6" r="1.7" fill="#86caca"/><circle cx="407.8" cy="182.2" r="1.7" fill="#86caca"/><circle cx="414.8" cy="180.7" r="1.7" fill="#86caca"/><circle cx="421.8" cy="181.6" r="1.7" fill="#86caca"/><circle cx="428.8" cy="182.2" r="1.7" fill="#86caca"/><circle cx="435.9" cy="182.2" r="1.7" fill="#86caca"/><circle cx="442.9" cy="182.2" r="1.7" fill="#86caca"/><circle cx="449.9" cy="182.6" r="1.7" fill="#86caca"/><circle cx="457.0" cy="182.6" r="1.7" fill="#86caca"/><circle cx="464.0" cy="181.4" r="1.7" fill="#86caca"/><circle cx="471.0" cy="182.6" r="1.7" fill="#86caca"/><circle cx="478.1" cy="181.4" r="1.7" fill="#86caca"/><circle cx="485.1" cy="180.6" r="1.7" fill="#86caca"/><circle cx="492.1" cy="182.6" r="1.7" fill="#86caca"/><circle cx="499.1" cy="182.6" r="1.7" fill="#86caca"/><circle cx="506.2" cy="181.4" r="1.7" fill="#86caca"/><circle cx="513.2" cy="182.0" r="1.7" fill="#86caca"/><circle cx="520.2" cy="182.6" r="1.7" fill="#86caca"/><circle cx="527.3" cy="182.6" r="1.7" fill="#86caca"/><circle cx="534.3" cy="181.4" r="1.7" fill="#86caca"/><circle cx="541.3" cy="182.0" r="1.7" fill="#86caca"/><circle cx="548.4" cy="181.4" r="1.7" fill="#86caca"/><circle cx="555.4" cy="182.0" r="1.7" fill="#86caca"/><circle cx="562.4" cy="181.4" r="1.7" fill="#86caca"/><circle cx="569.4" cy="182.6" r="1.7" fill="#86caca"/><circle cx="576.5" cy="181.4" r="1.7" fill="#86caca"/><circle cx="583.5" cy="181.4" r="1.7" fill="#86caca"/><circle cx="590.5" cy="181.4" r="1.7" fill="#86caca"/><circle cx="597.6" cy="182.0" r="1.7" fill="#86caca"/><circle cx="604.6" cy="182.6" r="1.7" fill="#86caca"/><circle cx="611.6" cy="181.4" r="1.7" fill="#86caca"/><circle cx="618.7" cy="182.6" r="1.7" fill="#86caca"/><circle cx="625.7" cy="181.4" r="1.7" fill="#86caca"/><circle cx="632.7" cy="182.0" r="1.7" fill="#86caca"/><circle cx="639.7" cy="181.4" r="1.7" fill="#86caca"/><circle cx="646.8" cy="182.0" r="1.7" fill="#86caca"/><circle cx="653.8" cy="183.4" r="1.7" fill="#86caca"/><circle cx="660.8" cy="183.4" r="1.7" fill="#86caca"/><circle cx="675.7" cy="182.6" r="1.7" fill="#86caca"/><rect x="225.5" y="145.0" width="659.0" height="55.7" fill="none" stroke="#8c8c8c" stroke-width="1.2"/><line x1="225.5" y1="144.4" x2="225.5" y2="201.29999999999998" stroke="#d8d8d8" stroke-width="1.3"/><line x1="225.5" y1="223.6" x2="884.5" y2="223.6" stroke="#454545" stroke-width="1" stroke-dasharray="2.5,3"/><line x1="225.5" y1="234.7" x2="884.5" y2="234.7" stroke="#454545" stroke-width="1" stroke-dasharray="2.5,3"/><line x1="225.5" y1="245.8" x2="884.5" y2="245.8" stroke="#454545" stroke-width="1" stroke-dasharray="2.5,3"/><line x1="225.5" y1="256.9" x2="884.5" y2="256.9" stroke="#454545" stroke-width="1" stroke-dasharray="2.5,3"/><line x1="230.9" y1="212.5" x2="230.9" y2="268.2" stroke="#454545" stroke-width="1" stroke-dasharray="2.5,3"/><line x1="263.8" y1="212.5" x2="263.8" y2="268.2" stroke="#454545" stroke-width="1" stroke-dasharray="2.5,3"/><line x1="296.6" y1="212.5" x2="296.6" y2="268.2" stroke="#454545" stroke-width="1" stroke-dasharray="2.5,3"/><line x1="329.5" y1="212.5" x2="329.5" y2="268.2" stroke="#454545" stroke-width="1" stroke-dasharray="2.5,3"/><line x1="362.3" y1="212.5" x2="362.3" y2="268.2" stroke="#454545" stroke-width="1" stroke-dasharray="2.5,3"/><line x1="395.1" y1="212.5" x2="395.1" y2="268.2" stroke="#454545" stroke-width="1" stroke-dasharray="2.5,3"/><line x1="428.0" y1="212.5" x2="428.0" y2="268.2" stroke="#454545" stroke-width="1" stroke-dasharray="2.5,3"/><line x1="460.9" y1="212.5" x2="460.9" y2="268.2" stroke="#454545" stroke-width="1" stroke-dasharray="2.5,3"/><line x1="493.7" y1="212.5" x2="493.7" y2="268.2" stroke="#454545" stroke-width="1" stroke-dasharray="2.5,3"/><line x1="526.6" y1="212.5" x2="526.6" y2="268.2" stroke="#454545" stroke-width="1" stroke-dasharray="2.5,3"/><line x1="559.4" y1="212.5" x2="559.4" y2="268.2" stroke="#454545" stroke-width="1" stroke-dasharray="2.5,3"/><line x1="592.2" y1="212.5" x2="592.2" y2="268.2" stroke="#454545" stroke-width="1" stroke-dasharray="2.5,3"/><line x1="625.1" y1="212.5" x2="625.1" y2="268.2" stroke="#454545" stroke-width="1" stroke-dasharray="2.5,3"/><line x1="658.0" y1="212.5" x2="658.0" y2="268.2" stroke="#454545" stroke-width="1" stroke-dasharray="2.5,3"/><line x1="690.8" y1="212.5" x2="690.8" y2="268.2" stroke="#454545" stroke-width="1" stroke-dasharray="2.5,3"/><line x1="723.6" y1="212.5" x2="723.6" y2="268.2" stroke="#454545" stroke-width="1" stroke-dasharray="2.5,3"/><line x1="756.5" y1="212.5" x2="756.5" y2="268.2" stroke="#454545" stroke-width="1" stroke-dasharray="2.5,3"/><line x1="789.4" y1="212.5" x2="789.4" y2="268.2" stroke="#454545" stroke-width="1" stroke-dasharray="2.5,3"/><line x1="822.2" y1="212.5" x2="822.2" y2="268.2" stroke="#454545" stroke-width="1" stroke-dasharray="2.5,3"/><line x1="855.0" y1="212.5" x2="855.0" y2="268.2" stroke="#454545" stroke-width="1" stroke-dasharray="2.5,3"/><line x1="225.5" y1="240.5" x2="884.5" y2="240.5" stroke="#e0e0e0" stroke-width="1.3"/><line x1="220.3" y1="216.7" x2="225.5" y2="216.7" stroke="#e0e0e0" stroke-width="1.2"/><text x="210.0" y="219.9" font-size="8.6" fill="#e8e8e8" textLength="8.2" lengthAdjust="spacingAndGlyphs">50</text><line x1="220.3" y1="240.5" x2="225.5" y2="240.5" stroke="#e0e0e0" stroke-width="1.2"/><text x="214.1" y="243.7" font-size="8.6" fill="#e8e8e8" textLength="4.1" lengthAdjust="spacingAndGlyphs">0</text><line x1="220.3" y1="263.3" x2="225.5" y2="263.3" stroke="#e0e0e0" stroke-width="1.2"/><text x="207.2" y="266.5" font-size="8.6" fill="#e8e8e8" textLength="11.0" lengthAdjust="spacingAndGlyphs">-50</text><text x="249" y="238.6" font-size="14" font-weight="bold" fill="#8a8a8a">max: 20,0</text><text x="249" y="255.4" font-size="14" font-weight="bold" fill="#8a8a8a">min: 5,0</text><polyline points="232.0,236.2 239.0,232.8 246.1,234.3 253.1,235.3 260.1,235.3 267.1,234.8 274.2,236.8 281.2,236.3 288.2,235.3 295.3,234.8 302.3,235.8 309.3,235.3 316.4,235.3 323.4,235.3 330.4,233.9 337.4,236.6 344.5,236.6 351.5,233.9 358.5,232.0 365.6,232.0 372.6,233.9 379.6,236.6 386.7,234.7 393.7,236.6 400.7,234.7 407.8,233.9 414.8,238.5 421.8,236.6 428.8,232.8 435.9,233.9 442.9,234.7 449.9,235.0 457.0,236.2 464.0,237.2 471.0,234.2 478.1,236.2 485.1,237.8 492.1,232.8 499.1,235.2 506.2,235.2 513.2,236.2 520.2,235.2 527.3,234.2 534.3,237.2 541.3,236.2 548.4,236.2 555.4,236.2 562.4,236.2 569.4,237.2 576.5,236.2 583.5,235.2 590.5,235.2 597.6,236.2 604.6,234.2 611.6,235.2 618.7,234.2 625.7,236.2 632.7,233.2 639.7,237.2 646.8,235.2 653.8,231.2 660.8,233.2 675.7,234.2" fill="none" stroke="#5aa8a8" stroke-width="1.1"/><circle cx="232.0" cy="236.2" r="1.7" fill="#86caca"/><circle cx="239.0" cy="232.8" r="1.7" fill="#86caca"/><circle cx="246.1" cy="234.3" r="1.7" fill="#86caca"/><circle cx="253.1" cy="235.3" r="1.7" fill="#86caca"/><circle cx="260.1" cy="235.3" r="1.7" fill="#86caca"/><circle cx="267.1" cy="234.8" r="1.7" fill="#86caca"/><circle cx="274.2" cy="236.8" r="1.7" fill="#86caca"/><circle cx="281.2" cy="236.3" r="1.7" fill="#86caca"/><circle cx="288.2" cy="235.3" r="1.7" fill="#86caca"/><circle cx="295.3" cy="234.8" r="1.7" fill="#86caca"/><circle cx="302.3" cy="235.8" r="1.7" fill="#86caca"/><circle cx="309.3" cy="235.3" r="1.7" fill="#86caca"/><circle cx="316.4" cy="235.3" r="1.7" fill="#86caca"/><circle cx="323.4" cy="235.3" r="1.7" fill="#86caca"/><circle cx="330.4" cy="233.9" r="1.7" fill="#86caca"/><circle cx="337.4" cy="236.6" r="1.7" fill="#86caca"/><circle cx="344.5" cy="236.6" r="1.7" fill="#86caca"/><circle cx="351.5" cy="233.9" r="1.7" fill="#86caca"/><circle cx="358.5" cy="232.0" r="1.7" fill="#86caca"/><circle cx="365.6" cy="232.0" r="1.7" fill="#86caca"/><circle cx="372.6" cy="233.9" r="1.7" fill="#86caca"/><circle cx="379.6" cy="236.6" r="1.7" fill="#86caca"/><circle cx="386.7" cy="234.7" r="1.7" fill="#86caca"/><circle cx="393.7" cy="236.6" r="1.7" fill="#86caca"/><circle cx="400.7" cy="234.7" r="1.7" fill="#86caca"/><circle cx="407.8" cy="233.9" r="1.7" fill="#86caca"/><circle cx="414.8" cy="238.5" r="1.7" fill="#86caca"/><circle cx="421.8" cy="236.6" r="1.7" fill="#86caca"/><circle cx="428.8" cy="232.8" r="1.7" fill="#86caca"/><circle cx="435.9" cy="233.9" r="1.7" fill="#86caca"/><circle cx="442.9" cy="234.7" r="1.7" fill="#86caca"/><circle cx="449.9" cy="235.0" r="1.7" fill="#86caca"/><circle cx="457.0" cy="236.2" r="1.7" fill="#86caca"/><circle cx="464.0" cy="237.2" r="1.7" fill="#86caca"/><circle cx="471.0" cy="234.2" r="1.7" fill="#86caca"/><circle cx="478.1" cy="236.2" r="1.7" fill="#86caca"/><circle cx="485.1" cy="237.8" r="1.7" fill="#86caca"/><circle cx="492.1" cy="232.8" r="1.7" fill="#86caca"/><circle cx="499.1" cy="235.2" r="1.7" fill="#86caca"/><circle cx="506.2" cy="235.2" r="1.7" fill="#86caca"/><circle cx="513.2" cy="236.2" r="1.7" fill="#86caca"/><circle cx="520.2" cy="235.2" r="1.7" fill="#86caca"/><circle cx="527.3" cy="234.2" r="1.7" fill="#86caca"/><circle cx="534.3" cy="237.2" r="1.7" fill="#86caca"/><circle cx="541.3" cy="236.2" r="1.7" fill="#86caca"/><circle cx="548.4" cy="236.2" r="1.7" fill="#86caca"/><circle cx="555.4" cy="236.2" r="1.7" fill="#86caca"/><circle cx="562.4" cy="236.2" r="1.7" fill="#86caca"/><circle cx="569.4" cy="237.2" r="1.7" fill="#86caca"/><circle cx="576.5" cy="236.2" r="1.7" fill="#86caca"/><circle cx="583.5" cy="235.2" r="1.7" fill="#86caca"/><circle cx="590.5" cy="235.2" r="1.7" fill="#86caca"/><circle cx="597.6" cy="236.2" r="1.7" fill="#86caca"/><circle cx="604.6" cy="234.2" r="1.7" fill="#86caca"/><circle cx="611.6" cy="235.2" r="1.7" fill="#86caca"/><circle cx="618.7" cy="234.2" r="1.7" fill="#86caca"/><circle cx="625.7" cy="236.2" r="1.7" fill="#86caca"/><circle cx="632.7" cy="233.2" r="1.7" fill="#86caca"/><circle cx="639.7" cy="237.2" r="1.7" fill="#86caca"/><circle cx="646.8" cy="235.2" r="1.7" fill="#86caca"/><circle cx="653.8" cy="231.2" r="1.7" fill="#86caca"/><circle cx="660.8" cy="233.2" r="1.7" fill="#86caca"/><circle cx="675.7" cy="234.2" r="1.7" fill="#86caca"/><rect x="225.5" y="212.5" width="659.0" height="55.7" fill="none" stroke="#8c8c8c" stroke-width="1.2"/><line x1="225.5" y1="211.9" x2="225.5" y2="268.8" stroke="#d8d8d8" stroke-width="1.3"/><line x1="225.5" y1="291.1" x2="884.5" y2="291.1" stroke="#454545" stroke-width="1" stroke-dasharray="2.5,3"/><line x1="225.5" y1="302.2" x2="884.5" y2="302.2" stroke="#454545" stroke-width="1" stroke-dasharray="2.5,3"/><line x1="225.5" y1="313.3" x2="884.5" y2="313.3" stroke="#454545" stroke-width="1" stroke-dasharray="2.5,3"/><line x1="225.5" y1="324.4" x2="884.5" y2="324.4" stroke="#454545" stroke-width="1" stroke-dasharray="2.5,3"/><line x1="230.9" y1="280.0" x2="230.9" y2="335.7" stroke="#454545" stroke-width="1" stroke-dasharray="2.5,3"/><line x1="263.8" y1="280.0" x2="263.8" y2="335.7" stroke="#454545" stroke-width="1" stroke-dasharray="2.5,3"/><line x1="296.6" y1="280.0" x2="296.6" y2="335.7" stroke="#454545" stroke-width="1" stroke-dasharray="2.5,3"/><line x1="329.5" y1="280.0" x2="329.5" y2="335.7" stroke="#454545" stroke-width="1" stroke-dasharray="2.5,3"/><line x1="362.3" y1="280.0" x2="362.3" y2="335.7" stroke="#454545" stroke-width="1" stroke-dasharray="2.5,3"/><line x1="395.1" y1="280.0" x2="395.1" y2="335.7" stroke="#454545" stroke-width="1" stroke-dasharray="2.5,3"/><line x1="428.0" y1="280.0" x2="428.0" y2="335.7" stroke="#454545" stroke-width="1" stroke-dasharray="2.5,3"/><line x1="460.9" y1="280.0" x2="460.9" y2="335.7" stroke="#454545" stroke-width="1" stroke-dasharray="2.5,3"/><line x1="493.7" y1="280.0" x2="493.7" y2="335.7" stroke="#454545" stroke-width="1" stroke-dasharray="2.5,3"/><line x1="526.6" y1="280.0" x2="526.6" y2="335.7" stroke="#454545" stroke-width="1" stroke-dasharray="2.5,3"/><line x1="559.4" y1="280.0" x2="559.4" y2="335.7" stroke="#454545" stroke-width="1" stroke-dasharray="2.5,3"/><line x1="592.2" y1="280.0" x2="592.2" y2="335.7" stroke="#454545" stroke-width="1" stroke-dasharray="2.5,3"/><line x1="625.1" y1="280.0" x2="625.1" y2="335.7" stroke="#454545" stroke-width="1" stroke-dasharray="2.5,3"/><line x1="658.0" y1="280.0" x2="658.0" y2="335.7" stroke="#454545" stroke-width="1" stroke-dasharray="2.5,3"/><line x1="690.8" y1="280.0" x2="690.8" y2="335.7" stroke="#454545" stroke-width="1" stroke-dasharray="2.5,3"/><line x1="723.6" y1="280.0" x2="723.6" y2="335.7" stroke="#454545" stroke-width="1" stroke-dasharray="2.5,3"/><line x1="756.5" y1="280.0" x2="756.5" y2="335.7" stroke="#454545" stroke-width="1" stroke-dasharray="2.5,3"/><line x1="789.4" y1="280.0" x2="789.4" y2="335.7" stroke="#454545" stroke-width="1" stroke-dasharray="2.5,3"/><line x1="822.2" y1="280.0" x2="822.2" y2="335.7" stroke="#454545" stroke-width="1" stroke-dasharray="2.5,3"/><line x1="855.0" y1="280.0" x2="855.0" y2="335.7" stroke="#454545" stroke-width="1" stroke-dasharray="2.5,3"/><line x1="220.3" y1="292.9" x2="225.5" y2="292.9" stroke="#e0e0e0" stroke-width="1.2"/><text x="201.8" y="296.1" font-size="8.6" fill="#e8e8e8" textLength="16.4" lengthAdjust="spacingAndGlyphs">2000</text><line x1="220.3" y1="314.0" x2="225.5" y2="314.0" stroke="#e0e0e0" stroke-width="1.2"/><text x="201.8" y="317.2" font-size="8.6" fill="#e8e8e8" textLength="16.4" lengthAdjust="spacingAndGlyphs">1000</text><line x1="220.3" y1="335.9" x2="225.5" y2="335.9" stroke="#e0e0e0" stroke-width="1.2"/><text x="214.1" y="339.1" font-size="8.6" fill="#e8e8e8" textLength="4.1" lengthAdjust="spacingAndGlyphs">0</text><text x="249" y="306.1" font-size="14" font-weight="bold" fill="#8a8a8a">max: 880</text><text x="249" y="322.9" font-size="14" font-weight="bold" fill="#8a8a8a">min: 880</text><polyline points="232.0,316.6 239.0,316.6 246.1,316.6 253.1,316.6 260.1,316.6 267.1,316.6 274.2,316.6 281.2,316.6 288.2,316.6 295.3,316.6 302.3,316.6 309.3,316.6 316.4,316.6 323.4,316.6 330.4,316.6 337.4,316.6 344.5,316.6 351.5,316.6 358.5,316.6 365.6,316.6 372.6,316.6 379.6,316.6 386.7,316.6 393.7,316.6 400.7,316.6 407.8,316.6 414.8,316.6 421.8,316.6 428.8,316.6 435.9,316.6 442.9,316.6 449.9,316.6 457.0,316.6 464.0,316.6 471.0,316.6 478.1,316.6 485.1,316.6 492.1,316.6 499.1,316.6 506.2,316.6 513.2,316.6 520.2,316.6 527.3,316.6 534.3,316.6 541.3,316.6 548.4,316.6 555.4,316.6 562.4,316.6 569.4,316.6 576.5,316.6 583.5,316.6 590.5,316.6 597.6,316.6 604.6,316.6 611.6,316.6 618.7,316.6 625.7,316.6 632.7,316.6 639.7,316.6 646.8,316.6 653.8,316.6 660.8,316.6 675.7,316.6" fill="none" stroke="#5aa8a8" stroke-width="1.1"/><circle cx="232.0" cy="316.6" r="1.7" fill="#86caca"/><circle cx="239.0" cy="316.6" r="1.7" fill="#86caca"/><circle cx="246.1" cy="316.6" r="1.7" fill="#86caca"/><circle cx="253.1" cy="316.6" r="1.7" fill="#86caca"/><circle cx="260.1" cy="316.6" r="1.7" fill="#86caca"/><circle cx="267.1" cy="316.6" r="1.7" fill="#86caca"/><circle cx="274.2" cy="316.6" r="1.7" fill="#86caca"/><circle cx="281.2" cy="316.6" r="1.7" fill="#86caca"/><circle cx="288.2" cy="316.6" r="1.7" fill="#86caca"/><circle cx="295.3" cy="316.6" r="1.7" fill="#86caca"/><circle cx="302.3" cy="316.6" r="1.7" fill="#86caca"/><circle cx="309.3" cy="316.6" r="1.7" fill="#86caca"/><circle cx="316.4" cy="316.6" r="1.7" fill="#86caca"/><circle cx="323.4" cy="316.6" r="1.7" fill="#86caca"/><circle cx="330.4" cy="316.6" r="1.7" fill="#86caca"/><circle cx="337.4" cy="316.6" r="1.7" fill="#86caca"/><circle cx="344.5" cy="316.6" r="1.7" fill="#86caca"/><circle cx="351.5" cy="316.6" r="1.7" fill="#86caca"/><circle cx="358.5" cy="316.6" r="1.7" fill="#86caca"/><circle cx="365.6" cy="316.6" r="1.7" fill="#86caca"/><circle cx="372.6" cy="316.6" r="1.7" fill="#86caca"/><circle cx="379.6" cy="316.6" r="1.7" fill="#86caca"/><circle cx="386.7" cy="316.6" r="1.7" fill="#86caca"/><circle cx="393.7" cy="316.6" r="1.7" fill="#86caca"/><circle cx="400.7" cy="316.6" r="1.7" fill="#86caca"/><circle cx="407.8" cy="316.6" r="1.7" fill="#86caca"/><circle cx="414.8" cy="316.6" r="1.7" fill="#86caca"/><circle cx="421.8" cy="316.6" r="1.7" fill="#86caca"/><circle cx="428.8" cy="316.6" r="1.7" fill="#86caca"/><circle cx="435.9" cy="316.6" r="1.7" fill="#86caca"/><circle cx="442.9" cy="316.6" r="1.7" fill="#86caca"/><circle cx="449.9" cy="316.6" r="1.7" fill="#86caca"/><circle cx="457.0" cy="316.6" r="1.7" fill="#86caca"/><circle cx="464.0" cy="316.6" r="1.7" fill="#86caca"/><circle cx="471.0" cy="316.6" r="1.7" fill="#86caca"/><circle cx="478.1" cy="316.6" r="1.7" fill="#86caca"/><circle cx="485.1" cy="316.6" r="1.7" fill="#86caca"/><circle cx="492.1" cy="316.6" r="1.7" fill="#86caca"/><circle cx="499.1" cy="316.6" r="1.7" fill="#86caca"/><circle cx="506.2" cy="316.6" r="1.7" fill="#86caca"/><circle cx="513.2" cy="316.6" r="1.7" fill="#86caca"/><circle cx="520.2" cy="316.6" r="1.7" fill="#86caca"/><circle cx="527.3" cy="316.6" r="1.7" fill="#86caca"/><circle cx="534.3" cy="316.6" r="1.7" fill="#86caca"/><circle cx="541.3" cy="316.6" r="1.7" fill="#86caca"/><circle cx="548.4" cy="316.6" r="1.7" fill="#86caca"/><circle cx="555.4" cy="316.6" r="1.7" fill="#86caca"/><circle cx="562.4" cy="316.6" r="1.7" fill="#86caca"/><circle cx="569.4" cy="316.6" r="1.7" fill="#86caca"/><circle cx="576.5" cy="316.6" r="1.7" fill="#86caca"/><circle cx="583.5" cy="316.6" r="1.7" fill="#86caca"/><circle cx="590.5" cy="316.6" r="1.7" fill="#86caca"/><circle cx="597.6" cy="316.6" r="1.7" fill="#86caca"/><circle cx="604.6" cy="316.6" r="1.7" fill="#86caca"/><circle cx="611.6" cy="316.6" r="1.7" fill="#86caca"/><circle cx="618.7" cy="316.6" r="1.7" fill="#86caca"/><circle cx="625.7" cy="316.6" r="1.7" fill="#86caca"/><circle cx="632.7" cy="316.6" r="1.7" fill="#86caca"/><circle cx="639.7" cy="316.6" r="1.7" fill="#86caca"/><circle cx="646.8" cy="316.6" r="1.7" fill="#86caca"/><circle cx="653.8" cy="316.6" r="1.7" fill="#86caca"/><circle cx="660.8" cy="316.6" r="1.7" fill="#86caca"/><circle cx="675.7" cy="316.6" r="1.7" fill="#86caca"/><rect x="225.5" y="280.0" width="659.0" height="55.7" fill="none" stroke="#8c8c8c" stroke-width="1.2"/><line x1="225.5" y1="279.4" x2="225.5" y2="336.3" stroke="#d8d8d8" stroke-width="1.3"/><line x1="225.5" y1="358.6" x2="884.5" y2="358.6" stroke="#454545" stroke-width="1" stroke-dasharray="2.5,3"/><line x1="225.5" y1="369.7" x2="884.5" y2="369.7" stroke="#454545" stroke-width="1" stroke-dasharray="2.5,3"/><line x1="225.5" y1="380.8" x2="884.5" y2="380.8" stroke="#454545" stroke-width="1" stroke-dasharray="2.5,3"/><line x1="225.5" y1="391.9" x2="884.5" y2="391.9" stroke="#454545" stroke-width="1" stroke-dasharray="2.5,3"/><line x1="230.9" y1="347.5" x2="230.9" y2="403.2" stroke="#454545" stroke-width="1" stroke-dasharray="2.5,3"/><line x1="263.8" y1="347.5" x2="263.8" y2="403.2" stroke="#454545" stroke-width="1" stroke-dasharray="2.5,3"/><line x1="296.6" y1="347.5" x2="296.6" y2="403.2" stroke="#454545" stroke-width="1" stroke-dasharray="2.5,3"/><line x1="329.5" y1="347.5" x2="329.5" y2="403.2" stroke="#454545" stroke-width="1" stroke-dasharray="2.5,3"/><line x1="362.3" y1="347.5" x2="362.3" y2="403.2" stroke="#454545" stroke-width="1" stroke-dasharray="2.5,3"/><line x1="395.1" y1="347.5" x2="395.1" y2="403.2" stroke="#454545" stroke-width="1" stroke-dasharray="2.5,3"/><line x1="428.0" y1="347.5" x2="428.0" y2="403.2" stroke="#454545" stroke-width="1" stroke-dasharray="2.5,3"/><line x1="460.9" y1="347.5" x2="460.9" y2="403.2" stroke="#454545" stroke-width="1" stroke-dasharray="2.5,3"/><line x1="493.7" y1="347.5" x2="493.7" y2="403.2" stroke="#454545" stroke-width="1" stroke-dasharray="2.5,3"/><line x1="526.6" y1="347.5" x2="526.6" y2="403.2" stroke="#454545" stroke-width="1" stroke-dasharray="2.5,3"/><line x1="559.4" y1="347.5" x2="559.4" y2="403.2" stroke="#454545" stroke-width="1" stroke-dasharray="2.5,3"/><line x1="592.2" y1="347.5" x2="592.2" y2="403.2" stroke="#454545" stroke-width="1" stroke-dasharray="2.5,3"/><line x1="625.1" y1="347.5" x2="625.1" y2="403.2" stroke="#454545" stroke-width="1" stroke-dasharray="2.5,3"/><line x1="658.0" y1="347.5" x2="658.0" y2="403.2" stroke="#454545" stroke-width="1" stroke-dasharray="2.5,3"/><line x1="690.8" y1="347.5" x2="690.8" y2="403.2" stroke="#454545" stroke-width="1" stroke-dasharray="2.5,3"/><line x1="723.6" y1="347.5" x2="723.6" y2="403.2" stroke="#454545" stroke-width="1" stroke-dasharray="2.5,3"/><line x1="756.5" y1="347.5" x2="756.5" y2="403.2" stroke="#454545" stroke-width="1" stroke-dasharray="2.5,3"/><line x1="789.4" y1="347.5" x2="789.4" y2="403.2" stroke="#454545" stroke-width="1" stroke-dasharray="2.5,3"/><line x1="822.2" y1="347.5" x2="822.2" y2="403.2" stroke="#454545" stroke-width="1" stroke-dasharray="2.5,3"/><line x1="855.0" y1="347.5" x2="855.0" y2="403.2" stroke="#454545" stroke-width="1" stroke-dasharray="2.5,3"/><line x1="220.3" y1="353.0" x2="225.5" y2="353.0" stroke="#e0e0e0" stroke-width="1.2"/><text x="210.0" y="356.2" font-size="8.6" fill="#e8e8e8" textLength="8.2" lengthAdjust="spacingAndGlyphs">60</text><line x1="220.3" y1="370.0" x2="225.5" y2="370.0" stroke="#e0e0e0" stroke-width="1.2"/><text x="210.0" y="373.2" font-size="8.6" fill="#e8e8e8" textLength="8.2" lengthAdjust="spacingAndGlyphs">40</text><line x1="220.3" y1="386.8" x2="225.5" y2="386.8" stroke="#e0e0e0" stroke-width="1.2"/><text x="210.0" y="389.9" font-size="8.6" fill="#e8e8e8" textLength="8.2" lengthAdjust="spacingAndGlyphs">20</text><line x1="220.3" y1="403.2" x2="225.5" y2="403.2" stroke="#e0e0e0" stroke-width="1.2"/><text x="214.1" y="406.4" font-size="8.6" fill="#e8e8e8" textLength="4.1" lengthAdjust="spacingAndGlyphs">0</text><text x="249" y="373.6" font-size="14" font-weight="bold" fill="#8a8a8a">max: 2,97</text><text x="249" y="390.4" font-size="14" font-weight="bold" fill="#8a8a8a">min: 2,66</text><polyline points="232.0,400.3 239.0,400.3 246.1,400.3 253.1,400.3 260.1,400.3 267.1,400.3 274.2,400.3 281.2,400.3 288.2,400.3 295.3,400.3 302.3,400.3 309.3,400.3 316.4,400.3 323.4,400.3 330.4,400.3 337.4,400.3 344.5,400.3 351.5,400.3 358.5,400.3 365.6,400.3 372.6,400.3 379.6,400.3 386.7,400.3 393.7,400.3 400.7,400.3 407.8,400.3 414.8,400.3 421.8,400.3 428.8,400.3 435.9,400.3 442.9,400.3 449.9,400.3 457.0,400.3 464.0,400.3 471.0,400.3 478.1,400.3 485.1,400.3 492.1,400.3 499.1,400.3 506.2,400.3 513.2,400.3 520.2,400.3 527.3,400.3 534.3,400.3 541.3,400.3 548.4,400.3 555.4,400.3 562.4,400.3 569.4,400.3 576.5,400.3 583.5,400.3 590.5,400.3 597.6,400.3 604.6,400.3 611.6,400.3 618.7,400.3 625.7,400.3 632.7,400.3 639.7,400.3 646.8,400.3 653.8,400.3 660.8,400.3 675.7,400.3" fill="none" stroke="#5aa8a8" stroke-width="1.1"/><circle cx="232.0" cy="400.3" r="1.7" fill="#86caca"/><circle cx="239.0" cy="400.3" r="1.7" fill="#86caca"/><circle cx="246.1" cy="400.3" r="1.7" fill="#86caca"/><circle cx="253.1" cy="400.3" r="1.7" fill="#86caca"/><circle cx="260.1" cy="400.3" r="1.7" fill="#86caca"/><circle cx="267.1" cy="400.3" r="1.7" fill="#86caca"/><circle cx="274.2" cy="400.3" r="1.7" fill="#86caca"/><circle cx="281.2" cy="400.3" r="1.7" fill="#86caca"/><circle cx="288.2" cy="400.3" r="1.7" fill="#86caca"/><circle cx="295.3" cy="400.3" r="1.7" fill="#86caca"/><circle cx="302.3" cy="400.3" r="1.7" fill="#86caca"/><circle cx="309.3" cy="400.3" r="1.7" fill="#86caca"/><circle cx="316.4" cy="400.3" r="1.7" fill="#86caca"/><circle cx="323.4" cy="400.3" r="1.7" fill="#86caca"/><circle cx="330.4" cy="400.3" r="1.7" fill="#86caca"/><circle cx="337.4" cy="400.3" r="1.7" fill="#86caca"/><circle cx="344.5" cy="400.3" r="1.7" fill="#86caca"/><circle cx="351.5" cy="400.3" r="1.7" fill="#86caca"/><circle cx="358.5" cy="400.3" r="1.7" fill="#86caca"/><circle cx="365.6" cy="400.3" r="1.7" fill="#86caca"/><circle cx="372.6" cy="400.3" r="1.7" fill="#86caca"/><circle cx="379.6" cy="400.3" r="1.7" fill="#86caca"/><circle cx="386.7" cy="400.3" r="1.7" fill="#86caca"/><circle cx="393.7" cy="400.3" r="1.7" fill="#86caca"/><circle cx="400.7" cy="400.3" r="1.7" fill="#86caca"/><circle cx="407.8" cy="400.3" r="1.7" fill="#86caca"/><circle cx="414.8" cy="400.3" r="1.7" fill="#86caca"/><circle cx="421.8" cy="400.3" r="1.7" fill="#86caca"/><circle cx="428.8" cy="400.3" r="1.7" fill="#86caca"/><circle cx="435.9" cy="400.3" r="1.7" fill="#86caca"/><circle cx="442.9" cy="400.3" r="1.7" fill="#86caca"/><circle cx="449.9" cy="400.3" r="1.7" fill="#86caca"/><circle cx="457.0" cy="400.3" r="1.7" fill="#86caca"/><circle cx="464.0" cy="400.3" r="1.7" fill="#86caca"/><circle cx="471.0" cy="400.3" r="1.7" fill="#86caca"/><circle cx="478.1" cy="400.3" r="1.7" fill="#86caca"/><circle cx="485.1" cy="400.3" r="1.7" fill="#86caca"/><circle cx="492.1" cy="400.3" r="1.7" fill="#86caca"/><circle cx="499.1" cy="400.3" r="1.7" fill="#86caca"/><circle cx="506.2" cy="400.3" r="1.7" fill="#86caca"/><circle cx="513.2" cy="400.3" r="1.7" fill="#86caca"/><circle cx="520.2" cy="400.3" r="1.7" fill="#86caca"/><circle cx="527.3" cy="400.3" r="1.7" fill="#86caca"/><circle cx="534.3" cy="400.3" r="1.7" fill="#86caca"/><circle cx="541.3" cy="400.3" r="1.7" fill="#86caca"/><circle cx="548.4" cy="400.3" r="1.7" fill="#86caca"/><circle cx="555.4" cy="400.3" r="1.7" fill="#86caca"/><circle cx="562.4" cy="400.3" r="1.7" fill="#86caca"/><circle cx="569.4" cy="400.3" r="1.7" fill="#86caca"/><circle cx="576.5" cy="400.3" r="1.7" fill="#86caca"/><circle cx="583.5" cy="400.3" r="1.7" fill="#86caca"/><circle cx="590.5" cy="400.3" r="1.7" fill="#86caca"/><circle cx="597.6" cy="400.3" r="1.7" fill="#86caca"/><circle cx="604.6" cy="400.3" r="1.7" fill="#86caca"/><circle cx="611.6" cy="400.3" r="1.7" fill="#86caca"/><circle cx="618.7" cy="400.3" r="1.7" fill="#86caca"/><circle cx="625.7" cy="400.3" r="1.7" fill="#86caca"/><circle cx="632.7" cy="400.3" r="1.7" fill="#86caca"/><circle cx="639.7" cy="400.3" r="1.7" fill="#86caca"/><circle cx="646.8" cy="400.3" r="1.7" fill="#86caca"/><circle cx="653.8" cy="400.3" r="1.7" fill="#86caca"/><circle cx="660.8" cy="400.3" r="1.7" fill="#86caca"/><circle cx="675.7" cy="400.3" r="1.7" fill="#86caca"/><rect x="225.5" y="347.5" width="659.0" height="55.7" fill="none" stroke="#8c8c8c" stroke-width="1.2"/><line x1="225.5" y1="346.9" x2="225.5" y2="403.8" stroke="#d8d8d8" stroke-width="1.3"/><line x1="225.5" y1="426.1" x2="884.5" y2="426.1" stroke="#454545" stroke-width="1" stroke-dasharray="2.5,3"/><line x1="225.5" y1="437.2" x2="884.5" y2="437.2" stroke="#454545" stroke-width="1" stroke-dasharray="2.5,3"/><line x1="225.5" y1="448.3" x2="884.5" y2="448.3" stroke="#454545" stroke-width="1" stroke-dasharray="2.5,3"/><line x1="225.5" y1="459.4" x2="884.5" y2="459.4" stroke="#454545" stroke-width="1" stroke-dasharray="2.5,3"/><line x1="230.9" y1="415.0" x2="230.9" y2="470.7" stroke="#454545" stroke-width="1" stroke-dasharray="2.5,3"/><line x1="263.8" y1="415.0" x2="263.8" y2="470.7" stroke="#454545" stroke-width="1" stroke-dasharray="2.5,3"/><line x1="296.6" y1="415.0" x2="296.6" y2="470.7" stroke="#454545" stroke-width="1" stroke-dasharray="2.5,3"/><line x1="329.5" y1="415.0" x2="329.5" y2="470.7" stroke="#454545" stroke-width="1" stroke-dasharray="2.5,3"/><line x1="362.3" y1="415.0" x2="362.3" y2="470.7" stroke="#454545" stroke-width="1" stroke-dasharray="2.5,3"/><line x1="395.1" y1="415.0" x2="395.1" y2="470.7" stroke="#454545" stroke-width="1" stroke-dasharray="2.5,3"/><line x1="428.0" y1="415.0" x2="428.0" y2="470.7" stroke="#454545" stroke-width="1" stroke-dasharray="2.5,3"/><line x1="460.9" y1="415.0" x2="460.9" y2="470.7" stroke="#454545" stroke-width="1" stroke-dasharray="2.5,3"/><line x1="493.7" y1="415.0" x2="493.7" y2="470.7" stroke="#454545" stroke-width="1" stroke-dasharray="2.5,3"/><line x1="526.6" y1="415.0" x2="526.6" y2="470.7" stroke="#454545" stroke-width="1" stroke-dasharray="2.5,3"/><line x1="559.4" y1="415.0" x2="559.4" y2="470.7" stroke="#454545" stroke-width="1" stroke-dasharray="2.5,3"/><line x1="592.2" y1="415.0" x2="592.2" y2="470.7" stroke="#454545" stroke-width="1" stroke-dasharray="2.5,3"/><line x1="625.1" y1="415.0" x2="625.1" y2="470.7" stroke="#454545" stroke-width="1" stroke-dasharray="2.5,3"/><line x1="658.0" y1="415.0" x2="658.0" y2="470.7" stroke="#454545" stroke-width="1" stroke-dasharray="2.5,3"/><line x1="690.8" y1="415.0" x2="690.8" y2="470.7" stroke="#454545" stroke-width="1" stroke-dasharray="2.5,3"/><line x1="723.6" y1="415.0" x2="723.6" y2="470.7" stroke="#454545" stroke-width="1" stroke-dasharray="2.5,3"/><line x1="756.5" y1="415.0" x2="756.5" y2="470.7" stroke="#454545" stroke-width="1" stroke-dasharray="2.5,3"/><line x1="789.4" y1="415.0" x2="789.4" y2="470.7" stroke="#454545" stroke-width="1" stroke-dasharray="2.5,3"/><line x1="822.2" y1="415.0" x2="822.2" y2="470.7" stroke="#454545" stroke-width="1" stroke-dasharray="2.5,3"/><line x1="855.0" y1="415.0" x2="855.0" y2="470.7" stroke="#454545" stroke-width="1" stroke-dasharray="2.5,3"/><line x1="220.3" y1="427.0" x2="225.5" y2="427.0" stroke="#e0e0e0" stroke-width="1.2"/><text x="205.9" y="430.2" font-size="8.6" fill="#e8e8e8" textLength="12.3" lengthAdjust="spacingAndGlyphs">400</text><line x1="220.3" y1="448.8" x2="225.5" y2="448.8" stroke="#e0e0e0" stroke-width="1.2"/><text x="205.9" y="451.9" font-size="8.6" fill="#e8e8e8" textLength="12.3" lengthAdjust="spacingAndGlyphs">200</text><line x1="220.3" y1="470.0" x2="225.5" y2="470.0" stroke="#e0e0e0" stroke-width="1.2"/><text x="214.1" y="473.2" font-size="8.6" fill="#e8e8e8" textLength="4.1" lengthAdjust="spacingAndGlyphs">0</text><text x="249" y="441.1" font-size="14" font-weight="bold" fill="#8a8a8a">max: 14,3</text><text x="249" y="457.9" font-size="14" font-weight="bold" fill="#8a8a8a">min: 12,4</text><polyline points="232.0,468.9 239.0,468.9 246.1,468.9 253.1,468.9 260.1,468.9 267.1,468.9 274.2,468.9 281.2,468.9 288.2,468.9 295.3,468.9 302.3,468.9 309.3,468.9 316.4,468.9 323.4,468.9 330.4,468.9 337.4,468.9 344.5,468.9 351.5,468.9 358.5,468.9 365.6,468.9 372.6,468.9 379.6,468.9 386.7,468.9 393.7,468.9 400.7,468.9 407.8,468.9 414.8,468.9 421.8,468.9 428.8,468.9 435.9,468.9 442.9,468.9 449.9,468.9 457.0,468.9 464.0,468.9 471.0,468.9 478.1,468.9 485.1,468.9 492.1,468.9 499.1,468.9 506.2,468.9 513.2,468.9 520.2,468.9 527.3,468.9 534.3,468.9 541.3,468.9 548.4,468.9 555.4,468.9 562.4,468.9 569.4,468.9 576.5,468.9 583.5,468.9 590.5,468.9 597.6,468.9 604.6,468.9 611.6,468.9 618.7,468.9 625.7,468.9 632.7,468.9 639.7,468.9 646.8,468.9 653.8,468.9 660.8,468.9 675.7,468.9" fill="none" stroke="#5aa8a8" stroke-width="1.1"/><circle cx="232.0" cy="468.9" r="1.7" fill="#86caca"/><circle cx="239.0" cy="468.9" r="1.7" fill="#86caca"/><circle cx="246.1" cy="468.9" r="1.7" fill="#86caca"/><circle cx="253.1" cy="468.9" r="1.7" fill="#86caca"/><circle cx="260.1" cy="468.9" r="1.7" fill="#86caca"/><circle cx="267.1" cy="468.9" r="1.7" fill="#86caca"/><circle cx="274.2" cy="468.9" r="1.7" fill="#86caca"/><circle cx="281.2" cy="468.9" r="1.7" fill="#86caca"/><circle cx="288.2" cy="468.9" r="1.7" fill="#86caca"/><circle cx="295.3" cy="468.9" r="1.7" fill="#86caca"/><circle cx="302.3" cy="468.9" r="1.7" fill="#86caca"/><circle cx="309.3" cy="468.9" r="1.7" fill="#86caca"/><circle cx="316.4" cy="468.9" r="1.7" fill="#86caca"/><circle cx="323.4" cy="468.9" r="1.7" fill="#86caca"/><circle cx="330.4" cy="468.9" r="1.7" fill="#86caca"/><circle cx="337.4" cy="468.9" r="1.7" fill="#86caca"/><circle cx="344.5" cy="468.9" r="1.7" fill="#86caca"/><circle cx="351.5" cy="468.9" r="1.7" fill="#86caca"/><circle cx="358.5" cy="468.9" r="1.7" fill="#86caca"/><circle cx="365.6" cy="468.9" r="1.7" fill="#86caca"/><circle cx="372.6" cy="468.9" r="1.7" fill="#86caca"/><circle cx="379.6" cy="468.9" r="1.7" fill="#86caca"/><circle cx="386.7" cy="468.9" r="1.7" fill="#86caca"/><circle cx="393.7" cy="468.9" r="1.7" fill="#86caca"/><circle cx="400.7" cy="468.9" r="1.7" fill="#86caca"/><circle cx="407.8" cy="468.9" r="1.7" fill="#86caca"/><circle cx="414.8" cy="468.9" r="1.7" fill="#86caca"/><circle cx="421.8" cy="468.9" r="1.7" fill="#86caca"/><circle cx="428.8" cy="468.9" r="1.7" fill="#86caca"/><circle cx="435.9" cy="468.9" r="1.7" fill="#86caca"/><circle cx="442.9" cy="468.9" r="1.7" fill="#86caca"/><circle cx="449.9" cy="468.9" r="1.7" fill="#86caca"/><circle cx="457.0" cy="468.9" r="1.7" fill="#86caca"/><circle cx="464.0" cy="468.9" r="1.7" fill="#86caca"/><circle cx="471.0" cy="468.9" r="1.7" fill="#86caca"/><circle cx="478.1" cy="468.9" r="1.7" fill="#86caca"/><circle cx="485.1" cy="468.9" r="1.7" fill="#86caca"/><circle cx="492.1" cy="468.9" r="1.7" fill="#86caca"/><circle cx="499.1" cy="468.9" r="1.7" fill="#86caca"/><circle cx="506.2" cy="468.9" r="1.7" fill="#86caca"/><circle cx="513.2" cy="468.9" r="1.7" fill="#86caca"/><circle cx="520.2" cy="468.9" r="1.7" fill="#86caca"/><circle cx="527.3" cy="468.9" r="1.7" fill="#86caca"/><circle cx="534.3" cy="468.9" r="1.7" fill="#86caca"/><circle cx="541.3" cy="468.9" r="1.7" fill="#86caca"/><circle cx="548.4" cy="468.9" r="1.7" fill="#86caca"/><circle cx="555.4" cy="468.9" r="1.7" fill="#86caca"/><circle cx="562.4" cy="468.9" r="1.7" fill="#86caca"/><circle cx="569.4" cy="468.9" r="1.7" fill="#86caca"/><circle cx="576.5" cy="468.9" r="1.7" fill="#86caca"/><circle cx="583.5" cy="468.9" r="1.7" fill="#86caca"/><circle cx="590.5" cy="468.9" r="1.7" fill="#86caca"/><circle cx="597.6" cy="468.9" r="1.7" fill="#86caca"/><circle cx="604.6" cy="468.9" r="1.7" fill="#86caca"/><circle cx="611.6" cy="468.9" r="1.7" fill="#86caca"/><circle cx="618.7" cy="468.9" r="1.7" fill="#86caca"/><circle cx="625.7" cy="468.9" r="1.7" fill="#86caca"/><circle cx="632.7" cy="468.9" r="1.7" fill="#86caca"/><circle cx="639.7" cy="468.9" r="1.7" fill="#86caca"/><circle cx="646.8" cy="468.9" r="1.7" fill="#86caca"/><circle cx="653.8" cy="468.9" r="1.7" fill="#86caca"/><circle cx="660.8" cy="468.9" r="1.7" fill="#86caca"/><circle cx="675.7" cy="468.9" r="1.7" fill="#86caca"/><rect x="225.5" y="415.0" width="659.0" height="55.7" fill="none" stroke="#8c8c8c" stroke-width="1.2"/><line x1="225.5" y1="414.4" x2="225.5" y2="471.3" stroke="#d8d8d8" stroke-width="1.3"/><line x1="225.5" y1="493.6" x2="884.5" y2="493.6" stroke="#454545" stroke-width="1" stroke-dasharray="2.5,3"/><line x1="225.5" y1="504.7" x2="884.5" y2="504.7" stroke="#454545" stroke-width="1" stroke-dasharray="2.5,3"/><line x1="225.5" y1="515.8" x2="884.5" y2="515.8" stroke="#454545" stroke-width="1" stroke-dasharray="2.5,3"/><line x1="225.5" y1="526.9" x2="884.5" y2="526.9" stroke="#454545" stroke-width="1" stroke-dasharray="2.5,3"/><line x1="230.9" y1="482.5" x2="230.9" y2="538.2" stroke="#454545" stroke-width="1" stroke-dasharray="2.5,3"/><line x1="263.8" y1="482.5" x2="263.8" y2="538.2" stroke="#454545" stroke-width="1" stroke-dasharray="2.5,3"/><line x1="296.6" y1="482.5" x2="296.6" y2="538.2" stroke="#454545" stroke-width="1" stroke-dasharray="2.5,3"/><line x1="329.5" y1="482.5" x2="329.5" y2="538.2" stroke="#454545" stroke-width="1" stroke-dasharray="2.5,3"/><line x1="362.3" y1="482.5" x2="362.3" y2="538.2" stroke="#454545" stroke-width="1" stroke-dasharray="2.5,3"/><line x1="395.1" y1="482.5" x2="395.1" y2="538.2" stroke="#454545" stroke-width="1" stroke-dasharray="2.5,3"/><line x1="428.0" y1="482.5" x2="428.0" y2="538.2" stroke="#454545" stroke-width="1" stroke-dasharray="2.5,3"/><line x1="460.9" y1="482.5" x2="460.9" y2="538.2" stroke="#454545" stroke-width="1" stroke-dasharray="2.5,3"/><line x1="493.7" y1="482.5" x2="493.7" y2="538.2" stroke="#454545" stroke-width="1" stroke-dasharray="2.5,3"/><line x1="526.6" y1="482.5" x2="526.6" y2="538.2" stroke="#454545" stroke-width="1" stroke-dasharray="2.5,3"/><line x1="559.4" y1="482.5" x2="559.4" y2="538.2" stroke="#454545" stroke-width="1" stroke-dasharray="2.5,3"/><line x1="592.2" y1="482.5" x2="592.2" y2="538.2" stroke="#454545" stroke-width="1" stroke-dasharray="2.5,3"/><line x1="625.1" y1="482.5" x2="625.1" y2="538.2" stroke="#454545" stroke-width="1" stroke-dasharray="2.5,3"/><line x1="658.0" y1="482.5" x2="658.0" y2="538.2" stroke="#454545" stroke-width="1" stroke-dasharray="2.5,3"/><line x1="690.8" y1="482.5" x2="690.8" y2="538.2" stroke="#454545" stroke-width="1" stroke-dasharray="2.5,3"/><line x1="723.6" y1="482.5" x2="723.6" y2="538.2" stroke="#454545" stroke-width="1" stroke-dasharray="2.5,3"/><line x1="756.5" y1="482.5" x2="756.5" y2="538.2" stroke="#454545" stroke-width="1" stroke-dasharray="2.5,3"/><line x1="789.4" y1="482.5" x2="789.4" y2="538.2" stroke="#454545" stroke-width="1" stroke-dasharray="2.5,3"/><line x1="822.2" y1="482.5" x2="822.2" y2="538.2" stroke="#454545" stroke-width="1" stroke-dasharray="2.5,3"/><line x1="855.0" y1="482.5" x2="855.0" y2="538.2" stroke="#454545" stroke-width="1" stroke-dasharray="2.5,3"/><line x1="220.3" y1="483.0" x2="225.5" y2="483.0" stroke="#e0e0e0" stroke-width="1.2"/><text x="205.9" y="486.2" font-size="8.6" fill="#e8e8e8" textLength="12.3" lengthAdjust="spacingAndGlyphs">150</text><line x1="220.3" y1="501.8" x2="225.5" y2="501.8" stroke="#e0e0e0" stroke-width="1.2"/><text x="205.9" y="504.9" font-size="8.6" fill="#e8e8e8" textLength="12.3" lengthAdjust="spacingAndGlyphs">100</text><line x1="220.3" y1="520.0" x2="225.5" y2="520.0" stroke="#e0e0e0" stroke-width="1.2"/><text x="210.0" y="523.2" font-size="8.6" fill="#e8e8e8" textLength="8.2" lengthAdjust="spacingAndGlyphs">50</text><line x1="220.3" y1="538.2" x2="225.5" y2="538.2" stroke="#e0e0e0" stroke-width="1.2"/><text x="214.1" y="541.5" font-size="8.6" fill="#e8e8e8" textLength="4.1" lengthAdjust="spacingAndGlyphs">0</text><text x="249" y="508.6" font-size="14" font-weight="bold" fill="#8a8a8a">max: 1,20</text><text x="249" y="525.4" font-size="14" font-weight="bold" fill="#8a8a8a">min: 1,00</text><polyline points="232.0,537.9 239.0,537.9 246.1,537.9 253.1,537.9 260.1,537.9 267.1,537.9 274.2,537.9 281.2,537.9 288.2,537.9 295.3,537.9 302.3,537.9 309.3,537.9 316.4,537.9 323.4,537.9 330.4,537.9 337.4,537.9 344.5,537.9 351.5,537.9 358.5,537.9 365.6,537.9 372.6,537.9 379.6,537.9 386.7,537.9 393.7,537.9 400.7,537.9 407.8,537.9 414.8,537.9 421.8,537.9 428.8,537.9 435.9,537.9 442.9,537.9 449.9,537.9 457.0,537.9 464.0,537.9 471.0,537.9 478.1,537.9 485.1,537.9 492.1,537.9 499.1,537.9 506.2,537.9 513.2,537.9 520.2,537.9 527.3,537.9 534.3,537.9 541.3,537.9 548.4,537.9 555.4,537.9 562.4,537.9 569.4,537.9 576.5,537.9 583.5,537.9 590.5,537.9 597.6,537.9 604.6,537.9 611.6,537.9 618.7,537.9 625.7,537.9 632.7,537.9 639.7,537.9 646.8,537.9 653.8,537.9 660.8,537.9 675.7,537.9" fill="none" stroke="#5aa8a8" stroke-width="1.1"/><circle cx="232.0" cy="537.9" r="1.7" fill="#86caca"/><circle cx="239.0" cy="537.9" r="1.7" fill="#86caca"/><circle cx="246.1" cy="537.9" r="1.7" fill="#86caca"/><circle cx="253.1" cy="537.9" r="1.7" fill="#86caca"/><circle cx="260.1" cy="537.9" r="1.7" fill="#86caca"/><circle cx="267.1" cy="537.9" r="1.7" fill="#86caca"/><circle cx="274.2" cy="537.9" r="1.7" fill="#86caca"/><circle cx="281.2" cy="537.9" r="1.7" fill="#86caca"/><circle cx="288.2" cy="537.9" r="1.7" fill="#86caca"/><circle cx="295.3" cy="537.9" r="1.7" fill="#86caca"/><circle cx="302.3" cy="537.9" r="1.7" fill="#86caca"/><circle cx="309.3" cy="537.9" r="1.7" fill="#86caca"/><circle cx="316.4" cy="537.9" r="1.7" fill="#86caca"/><circle cx="323.4" cy="537.9" r="1.7" fill="#86caca"/><circle cx="330.4" cy="537.9" r="1.7" fill="#86caca"/><circle cx="337.4" cy="537.9" r="1.7" fill="#86caca"/><circle cx="344.5" cy="537.9" r="1.7" fill="#86caca"/><circle cx="351.5" cy="537.9" r="1.7" fill="#86caca"/><circle cx="358.5" cy="537.9" r="1.7" fill="#86caca"/><circle cx="365.6" cy="537.9" r="1.7" fill="#86caca"/><circle cx="372.6" cy="537.9" r="1.7" fill="#86caca"/><circle cx="379.6" cy="537.9" r="1.7" fill="#86caca"/><circle cx="386.7" cy="537.9" r="1.7" fill="#86caca"/><circle cx="393.7" cy="537.9" r="1.7" fill="#86caca"/><circle cx="400.7" cy="537.9" r="1.7" fill="#86caca"/><circle cx="407.8" cy="537.9" r="1.7" fill="#86caca"/><circle cx="414.8" cy="537.9" r="1.7" fill="#86caca"/><circle cx="421.8" cy="537.9" r="1.7" fill="#86caca"/><circle cx="428.8" cy="537.9" r="1.7" fill="#86caca"/><circle cx="435.9" cy="537.9" r="1.7" fill="#86caca"/><circle cx="442.9" cy="537.9" r="1.7" fill="#86caca"/><circle cx="449.9" cy="537.9" r="1.7" fill="#86caca"/><circle cx="457.0" cy="537.9" r="1.7" fill="#86caca"/><circle cx="464.0" cy="537.9" r="1.7" fill="#86caca"/><circle cx="471.0" cy="537.9" r="1.7" fill="#86caca"/><circle cx="478.1" cy="537.9" r="1.7" fill="#86caca"/><circle cx="485.1" cy="537.9" r="1.7" fill="#86caca"/><circle cx="492.1" cy="537.9" r="1.7" fill="#86caca"/><circle cx="499.1" cy="537.9" r="1.7" fill="#86caca"/><circle cx="506.2" cy="537.9" r="1.7" fill="#86caca"/><circle cx="513.2" cy="537.9" r="1.7" fill="#86caca"/><circle cx="520.2" cy="537.9" r="1.7" fill="#86caca"/><circle cx="527.3" cy="537.9" r="1.7" fill="#86caca"/><circle cx="534.3" cy="537.9" r="1.7" fill="#86caca"/><circle cx="541.3" cy="537.9" r="1.7" fill="#86caca"/><circle cx="548.4" cy="537.9" r="1.7" fill="#86caca"/><circle cx="555.4" cy="537.9" r="1.7" fill="#86caca"/><circle cx="562.4" cy="537.9" r="1.7" fill="#86caca"/><circle cx="569.4" cy="537.9" r="1.7" fill="#86caca"/><circle cx="576.5" cy="537.9" r="1.7" fill="#86caca"/><circle cx="583.5" cy="537.9" r="1.7" fill="#86caca"/><circle cx="590.5" cy="537.9" r="1.7" fill="#86caca"/><circle cx="597.6" cy="537.9" r="1.7" fill="#86caca"/><circle cx="604.6" cy="537.9" r="1.7" fill="#86caca"/><circle cx="611.6" cy="537.9" r="1.7" fill="#86caca"/><circle cx="618.7" cy="537.9" r="1.7" fill="#86caca"/><circle cx="625.7" cy="537.9" r="1.7" fill="#86caca"/><circle cx="632.7" cy="537.9" r="1.7" fill="#86caca"/><circle cx="639.7" cy="537.9" r="1.7" fill="#86caca"/><circle cx="646.8" cy="537.9" r="1.7" fill="#86caca"/><circle cx="653.8" cy="537.9" r="1.7" fill="#86caca"/><circle cx="660.8" cy="537.9" r="1.7" fill="#86caca"/><circle cx="675.7" cy="537.9" r="1.7" fill="#86caca"/><rect x="225.5" y="482.5" width="659.0" height="55.7" fill="none" stroke="#8c8c8c" stroke-width="1.2"/><line x1="225.5" y1="481.9" x2="225.5" y2="538.8000000000001" stroke="#d8d8d8" stroke-width="1.3"/><line x1="225.5" y1="561.1" x2="884.5" y2="561.1" stroke="#454545" stroke-width="1" stroke-dasharray="2.5,3"/><line x1="225.5" y1="572.2" x2="884.5" y2="572.2" stroke="#454545" stroke-width="1" stroke-dasharray="2.5,3"/><line x1="225.5" y1="583.3" x2="884.5" y2="583.3" stroke="#454545" stroke-width="1" stroke-dasharray="2.5,3"/><line x1="225.5" y1="594.4" x2="884.5" y2="594.4" stroke="#454545" stroke-width="1" stroke-dasharray="2.5,3"/><line x1="230.9" y1="550.0" x2="230.9" y2="605.7" stroke="#454545" stroke-width="1" stroke-dasharray="2.5,3"/><line x1="263.8" y1="550.0" x2="263.8" y2="605.7" stroke="#454545" stroke-width="1" stroke-dasharray="2.5,3"/><line x1="296.6" y1="550.0" x2="296.6" y2="605.7" stroke="#454545" stroke-width="1" stroke-dasharray="2.5,3"/><line x1="329.5" y1="550.0" x2="329.5" y2="605.7" stroke="#454545" stroke-width="1" stroke-dasharray="2.5,3"/><line x1="362.3" y1="550.0" x2="362.3" y2="605.7" stroke="#454545" stroke-width="1" stroke-dasharray="2.5,3"/><line x1="395.1" y1="550.0" x2="395.1" y2="605.7" stroke="#454545" stroke-width="1" stroke-dasharray="2.5,3"/><line x1="428.0" y1="550.0" x2="428.0" y2="605.7" stroke="#454545" stroke-width="1" stroke-dasharray="2.5,3"/><line x1="460.9" y1="550.0" x2="460.9" y2="605.7" stroke="#454545" stroke-width="1" stroke-dasharray="2.5,3"/><line x1="493.7" y1="550.0" x2="493.7" y2="605.7" stroke="#454545" stroke-width="1" stroke-dasharray="2.5,3"/><line x1="526.6" y1="550.0" x2="526.6" y2="605.7" stroke="#454545" stroke-width="1" stroke-dasharray="2.5,3"/><line x1="559.4" y1="550.0" x2="559.4" y2="605.7" stroke="#454545" stroke-width="1" stroke-dasharray="2.5,3"/><line x1="592.2" y1="550.0" x2="592.2" y2="605.7" stroke="#454545" stroke-width="1" stroke-dasharray="2.5,3"/><line x1="625.1" y1="550.0" x2="625.1" y2="605.7" stroke="#454545" stroke-width="1" stroke-dasharray="2.5,3"/><line x1="658.0" y1="550.0" x2="658.0" y2="605.7" stroke="#454545" stroke-width="1" stroke-dasharray="2.5,3"/><line x1="690.8" y1="550.0" x2="690.8" y2="605.7" stroke="#454545" stroke-width="1" stroke-dasharray="2.5,3"/><line x1="723.6" y1="550.0" x2="723.6" y2="605.7" stroke="#454545" stroke-width="1" stroke-dasharray="2.5,3"/><line x1="756.5" y1="550.0" x2="756.5" y2="605.7" stroke="#454545" stroke-width="1" stroke-dasharray="2.5,3"/><line x1="789.4" y1="550.0" x2="789.4" y2="605.7" stroke="#454545" stroke-width="1" stroke-dasharray="2.5,3"/><line x1="822.2" y1="550.0" x2="822.2" y2="605.7" stroke="#454545" stroke-width="1" stroke-dasharray="2.5,3"/><line x1="855.0" y1="550.0" x2="855.0" y2="605.7" stroke="#454545" stroke-width="1" stroke-dasharray="2.5,3"/><line x1="220.3" y1="562.0" x2="225.5" y2="562.0" stroke="#e0e0e0" stroke-width="1.2"/><text x="204.0" y="565.2" font-size="8.6" fill="#e8e8e8" textLength="14.2" lengthAdjust="spacingAndGlyphs">1.00</text><line x1="220.3" y1="584.0" x2="225.5" y2="584.0" stroke="#e0e0e0" stroke-width="1.2"/><text x="204.0" y="587.2" font-size="8.6" fill="#e8e8e8" textLength="14.2" lengthAdjust="spacingAndGlyphs">0.50</text><line x1="220.3" y1="606.2" x2="225.5" y2="606.2" stroke="#e0e0e0" stroke-width="1.2"/><text x="204.0" y="609.4" font-size="8.6" fill="#e8e8e8" textLength="14.2" lengthAdjust="spacingAndGlyphs">0.00</text><text x="249" y="576.1" font-size="14" font-weight="bold" fill="#8a8a8a">max: 0,801</text><text x="249" y="592.9" font-size="14" font-weight="bold" fill="#8a8a8a">min: 0,059</text><polyline points="226.5,598.0 232.0,588.0 239.0,572.0 246.1,570.6 253.1,570.0 260.1,570.0 267.1,570.0 274.2,570.5 281.2,571.0 288.2,571.0 295.3,571.0 302.3,572.0 309.3,573.0 316.4,576.6 323.4,585.6 330.4,575.4 337.4,574.0 344.5,576.6 351.5,598.0 358.5,600.6 365.6,596.6 372.6,599.0 379.6,602.0 386.7,603.4 393.7,603.4 400.7,603.4 407.8,603.4 414.8,603.4 421.8,603.4 428.8,603.4 435.9,603.4 442.9,603.4 449.9,603.4 457.0,602.0 464.0,594.0 471.0,587.0 478.1,579.0 485.1,571.4 492.1,571.0 499.1,571.0 506.2,573.0 513.2,574.0 520.2,575.0 527.3,576.6 534.3,593.0 541.3,599.4 548.4,592.4 555.4,596.6 562.4,602.0 569.4,602.4 576.5,602.4 583.5,603.0 590.5,603.4 597.6,603.4 604.6,603.4 611.6,601.4 618.7,583.0 625.7,581.0 632.7,581.0 639.7,579.0 646.8,575.0 653.8,573.0 660.8,572.0 675.7,570.6" fill="none" stroke="#5aa8a8" stroke-width="1.1"/><circle cx="232.0" cy="588.0" r="1.7" fill="#86caca"/><circle cx="239.0" cy="572.0" r="1.7" fill="#86caca"/><circle cx="246.1" cy="570.6" r="1.7" fill="#86caca"/><circle cx="253.1" cy="570.0" r="1.7" fill="#86caca"/><circle cx="260.1" cy="570.0" r="1.7" fill="#86caca"/><circle cx="267.1" cy="570.0" r="1.7" fill="#86caca"/><circle cx="274.2" cy="570.5" r="1.7" fill="#86caca"/><circle cx="281.2" cy="571.0" r="1.7" fill="#86caca"/><circle cx="288.2" cy="571.0" r="1.7" fill="#86caca"/><circle cx="295.3" cy="571.0" r="1.7" fill="#86caca"/><circle cx="302.3" cy="572.0" r="1.7" fill="#86caca"/><circle cx="309.3" cy="573.0" r="1.7" fill="#86caca"/><circle cx="316.4" cy="576.6" r="1.7" fill="#86caca"/><circle cx="323.4" cy="585.6" r="1.7" fill="#86caca"/><circle cx="330.4" cy="575.4" r="1.7" fill="#86caca"/><circle cx="337.4" cy="574.0" r="1.7" fill="#86caca"/><circle cx="344.5" cy="576.6" r="1.7" fill="#86caca"/><circle cx="351.5" cy="598.0" r="1.7" fill="#86caca"/><circle cx="358.5" cy="600.6" r="1.7" fill="#86caca"/><circle cx="365.6" cy="596.6" r="1.7" fill="#86caca"/><circle cx="372.6" cy="599.0" r="1.7" fill="#86caca"/><circle cx="379.6" cy="602.0" r="1.7" fill="#86caca"/><circle cx="386.7" cy="603.4" r="1.7" fill="#86caca"/><circle cx="393.7" cy="603.4" r="1.7" fill="#86caca"/><circle cx="400.7" cy="603.4" r="1.7" fill="#86caca"/><circle cx="407.8" cy="603.4" r="1.7" fill="#86caca"/><circle cx="414.8" cy="603.4" r="1.7" fill="#86caca"/><circle cx="421.8" cy="603.4" r="1.7" fill="#86caca"/><circle cx="428.8" cy="603.4" r="1.7" fill="#86caca"/><circle cx="435.9" cy="603.4" r="1.7" fill="#86caca"/><circle cx="442.9" cy="603.4" r="1.7" fill="#86caca"/><circle cx="449.9" cy="603.4" r="1.7" fill="#86caca"/><circle cx="457.0" cy="602.0" r="1.7" fill="#86caca"/><circle cx="464.0" cy="594.0" r="1.7" fill="#86caca"/><circle cx="471.0" cy="587.0" r="1.7" fill="#86caca"/><circle cx="478.1" cy="579.0" r="1.7" fill="#86caca"/><circle cx="485.1" cy="571.4" r="1.7" fill="#86caca"/><circle cx="492.1" cy="571.0" r="1.7" fill="#86caca"/><circle cx="499.1" cy="571.0" r="1.7" fill="#86caca"/><circle cx="506.2" cy="573.0" r="1.7" fill="#86caca"/><circle cx="513.2" cy="574.0" r="1.7" fill="#86caca"/><circle cx="520.2" cy="575.0" r="1.7" fill="#86caca"/><circle cx="527.3" cy="576.6" r="1.7" fill="#86caca"/><circle cx="534.3" cy="593.0" r="1.7" fill="#86caca"/><circle cx="541.3" cy="599.4" r="1.7" fill="#86caca"/><circle cx="548.4" cy="592.4" r="1.7" fill="#86caca"/><circle cx="555.4" cy="596.6" r="1.7" fill="#86caca"/><circle cx="562.4" cy="602.0" r="1.7" fill="#86caca"/><circle cx="569.4" cy="602.4" r="1.7" fill="#86caca"/><circle cx="576.5" cy="602.4" r="1.7" fill="#86caca"/><circle cx="583.5" cy="603.0" r="1.7" fill="#86caca"/><circle cx="590.5" cy="603.4" r="1.7" fill="#86caca"/><circle cx="597.6" cy="603.4" r="1.7" fill="#86caca"/><circle cx="604.6" cy="603.4" r="1.7" fill="#86caca"/><circle cx="611.6" cy="601.4" r="1.7" fill="#86caca"/><circle cx="618.7" cy="583.0" r="1.7" fill="#86caca"/><circle cx="625.7" cy="581.0" r="1.7" fill="#86caca"/><circle cx="632.7" cy="581.0" r="1.7" fill="#86caca"/><circle cx="639.7" cy="579.0" r="1.7" fill="#86caca"/><circle cx="646.8" cy="575.0" r="1.7" fill="#86caca"/><circle cx="653.8" cy="573.0" r="1.7" fill="#86caca"/><circle cx="660.8" cy="572.0" r="1.7" fill="#86caca"/><circle cx="675.7" cy="570.6" r="1.7" fill="#86caca"/><rect x="225.5" y="550.0" width="659.0" height="55.7" fill="none" stroke="#8c8c8c" stroke-width="1.2"/><line x1="225.5" y1="549.4" x2="225.5" y2="606.3000000000001" stroke="#d8d8d8" stroke-width="1.3"/><text x="872.6" y="103.6" text-anchor="end" font-size="17" font-weight="bold" fill="#c8c8c8">0:4:38,134</text><rect x="180" y="70" width="2" height="541" fill="#f0f0f0"/><rect x="182" y="136.5" width="719" height="3" fill="#d4d4d4"/><rect x="182" y="204.0" width="719" height="3" fill="#d4d4d4"/><rect x="182" y="271.5" width="719" height="3" fill="#d4d4d4"/><rect x="182" y="339.0" width="719" height="3" fill="#d4d4d4"/><rect x="182" y="406.5" width="719" height="3" fill="#d4d4d4"/><rect x="182" y="474.0" width="719" height="3" fill="#d4d4d4"/><rect x="182" y="541.5" width="719" height="3" fill="#d4d4d4"/><rect x="901" y="72" width="1.5" height="538" fill="#b4b4b4"/><rect x="902.5" y="70" width="2.5" height="541" fill="#fafafa"/></svg>
<div class="b" style="left:912.5px;top:79px;width:258.5px;height:343.5px;background:#084c9e;"></div>
<div class="t" style="left:922.5px;top:83.50px;font-size:13px;line-height:13px;color:#e6eefa;font-weight:bold;">Выбор набора параметров (F6)</div>
<div class="b" style="left:923px;top:101.5px;width:236px;height:20px;border:1px solid #9aa6b8;border-radius:2px;background:linear-gradient(#f6f6f6 0,#ececec 50%,#dcdcdc 51%,#d4d4d4 100%);"></div>
<div class="t" style="left:926.8px;top:106.00px;font-size:13px;line-height:13px;color:#000;font-weight:bold;">Пользовательский</div>
<svg class="b" style="left:1150px;top:111px" width="8" height="5"><path d="M0 0H7.5L3.75 4Z" fill="#000"/></svg>
<div class="b" style="left:922.5px;top:131.5px;width:238.5px;height:232.5px;border:1px solid #828790;background:#f6f6f6;"></div>
<div class="b" style="left:925.8px;top:138.0px;width:8.5px;height:8.5px;border:1px solid #a4a4a4;background:linear-gradient(135deg,#d8d8d8,#fafafa);"></div>
<svg class="b" style="left:926px;top:138.2px" width="10" height="10"><path d="M2 5L4.2 8L8 1.5" fill="none" stroke="#4a5890" stroke-width="1.4"/></svg>
<div class="t" style="left:941.4px;top:136.01px;font-size:12.75px;line-height:12.75px;color:#1a1a1a;font-weight:normal;">Температура охл. жидкости</div>
<div class="b" style="left:925.8px;top:154.6px;width:8.5px;height:8.5px;border:1px solid #a4a4a4;background:linear-gradient(135deg,#d8d8d8,#fafafa);"></div>
<div class="t" style="left:941.4px;top:152.61px;font-size:12.75px;line-height:12.75px;color:#1a1a1a;font-weight:normal;">Соотношение воздух/топливо</div>
<div class="b" style="left:925.8px;top:171.2px;width:8.5px;height:8.5px;border:1px solid #a4a4a4;background:linear-gradient(135deg,#d8d8d8,#fafafa);"></div>
<div class="t" style="left:941.4px;top:169.21px;font-size:12.75px;line-height:12.75px;color:#1a1a1a;font-weight:normal;">Пол. дроссельной заслонки</div>
<div class="b" style="left:925.8px;top:187.8px;width:8.5px;height:8.5px;border:1px solid #a4a4a4;background:linear-gradient(135deg,#d8d8d8,#fafafa);"></div>
<div class="t" style="left:941.4px;top:185.81px;font-size:12.75px;line-height:12.75px;color:#1a1a1a;font-weight:normal;">Скорость вращения двиг.</div>
<div class="b" style="left:925.8px;top:204.4px;width:8.5px;height:8.5px;border:1px solid #a4a4a4;background:linear-gradient(135deg,#d8d8d8,#fafafa);"></div>
<svg class="b" style="left:926px;top:204.6px" width="10" height="10"><path d="M2 5L4.2 8L8 1.5" fill="none" stroke="#4a5890" stroke-width="1.4"/></svg>
<div class="t" style="left:941.4px;top:202.41px;font-size:12.75px;line-height:12.75px;color:#1a1a1a;font-weight:normal;">Скорость вр. двиг. на х/х</div>
<div class="b" style="left:925.8px;top:221.0px;width:8.5px;height:8.5px;border:1px solid #a4a4a4;background:linear-gradient(135deg,#d8d8d8,#fafafa);"></div>
<div class="t" style="left:941.4px;top:219.01px;font-size:12.75px;line-height:12.75px;color:#1a1a1a;font-weight:normal;">Желаемое пол. рег. х/х</div>
<div class="b" style="left:925.8px;top:237.60000000000002px;width:8.5px;height:8.5px;border:1px solid #a4a4a4;background:linear-gradient(135deg,#d8d8d8,#fafafa);"></div>
<div class="t" style="left:941.4px;top:235.61px;font-size:12.75px;line-height:12.75px;color:#1a1a1a;font-weight:normal;">Текущее пол. рег. х/х</div>
<div class="b" style="left:925.8px;top:254.20000000000002px;width:8.5px;height:8.5px;border:1px solid #a4a4a4;background:linear-gradient(135deg,#d8d8d8,#fafafa);"></div>
<div class="t" style="left:941.4px;top:252.21px;font-size:12.75px;line-height:12.75px;color:#1a1a1a;font-weight:normal;">Коэф. коррекции вр. впр.</div>
<div class="b" style="left:925.8px;top:270.8px;width:8.5px;height:8.5px;border:1px solid #a4a4a4;background:linear-gradient(135deg,#d8d8d8,#fafafa);"></div>
<svg class="b" style="left:926px;top:271.0px" width="10" height="10"><path d="M2 5L4.2 8L8 1.5" fill="none" stroke="#4a5890" stroke-width="1.4"/></svg>
<div class="t" style="left:941.4px;top:268.81px;font-size:12.75px;line-height:12.75px;color:#1a1a1a;font-weight:normal;">Угол опережения зажигания</div>
<div class="b" style="left:925.8px;top:287.40000000000003px;width:8.5px;height:8.5px;border:1px solid #a4a4a4;background:linear-gradient(135deg,#d8d8d8,#fafafa);"></div>
<div class="t" style="left:941.4px;top:285.41px;font-size:12.75px;line-height:12.75px;color:#1a1a1a;font-weight:normal;">Скорость автомобиля</div>
<div class="b" style="left:925.8px;top:304.0px;width:8.5px;height:8.5px;border:1px solid #a4a4a4;background:linear-gradient(135deg,#d8d8d8,#fafafa);"></div>
<div class="t" style="left:941.4px;top:302.01px;font-size:12.75px;line-height:12.75px;color:#1a1a1a;font-weight:normal;">Напряжение бортсети</div>
<div class="b" style="left:925.8px;top:320.6px;width:8.5px;height:8.5px;border:1px solid #a4a4a4;background:linear-gradient(135deg,#d8d8d8,#fafafa);"></div>
<svg class="b" style="left:926px;top:320.8px" width="10" height="10"><path d="M2 5L4.2 8L8 1.5" fill="none" stroke="#4a5890" stroke-width="1.4"/></svg>
<div class="t" style="left:941.4px;top:318.61px;font-size:12.75px;line-height:12.75px;color:#1a1a1a;font-weight:normal;">Желаемые обороты х/х</div>
<div class="b" style="left:937.5px;top:333.9px;width:208px;height:16px;background:#aacbee;"></div>
<div class="b" style="left:925.8px;top:337.2px;width:8.5px;height:8.5px;border:1px solid #a4a4a4;background:linear-gradient(135deg,#d8d8d8,#fafafa);"></div>
<svg class="b" style="left:926px;top:337.4px" width="10" height="10"><path d="M2 5L4.2 8L8 1.5" fill="none" stroke="#4a5890" stroke-width="1.4"/></svg>
<div class="t" style="left:941.4px;top:335.21px;font-size:12.75px;line-height:12.75px;color:#1a1a1a;font-weight:normal;">Напряжение на ДК</div>
<div class="b" style="left:925.8px;top:353.8px;width:8.5px;height:8.5px;border:1px solid #a4a4a4;background:linear-gradient(135deg,#d8d8d8,#fafafa);"></div>
<div class="t" style="left:941.4px;top:351.81px;font-size:12.75px;line-height:12.75px;color:#1a1a1a;font-weight:normal;">Готовность ДК</div>
<div class="b" style="left:1146px;top:132.5px;width:15px;height:231px;background:#eaeaea;border-left:1px solid #e0e0e0;"></div>
<svg class="b" style="left:1149px;top:139px" width="9" height="5"><path d="M0 4.5H9L4.5 0Z" fill="#555"/></svg>
<svg class="b" style="left:1149px;top:355px" width="9" height="5"><path d="M0 0H9L4.5 4.5Z" fill="#555"/></svg>
<div class="b" style="left:1147.5px;top:148.8px;width:11.5px;height:64px;border:1px solid #9a9a9a;border-radius:2px;background:linear-gradient(90deg,#f2f2f2,#d8d8d8);"></div>
<div class="b" style="left:1150px;top:179.4px;width:7px;height:1px;background:#777;"></div>
<div class="b" style="left:1150px;top:181.4px;width:7px;height:1px;background:#777;"></div>
<div class="b" style="left:1150px;top:183.4px;width:7px;height:1px;background:#777;"></div>
<div class="b" style="left:985.8px;top:386px;width:107.5px;height:25.2px;border:1px solid #6a7a90;border-radius:3px;background:linear-gradient(#f4f4f4 0,#ececec 45%,#dedede 55%,#d6d6d6 100%);box-shadow:0 0 0 1px #a8c4ec;"></div>
<div class="t" style="left:992.9px;top:393.26px;font-size:13.4px;line-height:13.4px;color:#1a1a1a;font-weight:normal;">Убрать ВСЕ (&lt;)</div>
<div class="b" style="left:913px;top:435.5px;width:251.5px;height:78px;border:3px solid #084c9e;border-top:19px solid #084c9e;background:#f0f0f0;"></div>
<div class="t" style="left:918px;top:437.43px;font-size:13.2px;line-height:13.2px;color:#e6eefa;font-weight:bold;">Управление ИМ (F5)</div>
<div class="b" style="left:921.3px;top:464.3px;width:240.7px;height:20px;border:1px solid #8a8a8a;border-radius:2px;background:linear-gradient(#f6f6f6 0,#ececec 50%,#dcdcdc 51%,#d4d4d4 100%);"></div>
<div class="t" style="left:925.2px;top:470.33px;font-size:12.6px;line-height:12.6px;color:#111;font-weight:normal;">Форсунка 4</div>
<svg class="b" style="left:1153px;top:473px" width="8" height="5"><path d="M0 0H7.5L3.75 4Z" fill="#000"/></svg>
<div class="b" style="left:923px;top:502px;width:66.5px;height:21.5px;border:1px solid #8a8a8a;border-radius:3px;background:linear-gradient(#f4f4f4 0,#ececec 45%,#dedede 55%,#d6d6d6 100%);"></div>
<div class="t" style="left:923px;top:508.83px;font-size:12.6px;line-height:12.6px;color:#111;font-weight:normal;width:68.5px;text-align:center;">Выкл.</div>
<div class="b" style="left:993.7px;top:502px;width:57.8px;height:21.5px;border:1px solid #8a8a8a;border-radius:3px;background:linear-gradient(#f4f4f4 0,#ececec 45%,#dedede 55%,#d6d6d6 100%);"></div>
<div class="t" style="left:993.7px;top:508.83px;font-size:12.6px;line-height:12.6px;color:#111;font-weight:normal;width:59.8px;text-align:center;">Вкл.</div>
<div class="b" style="left:1056px;top:502px;width:23.8px;height:21.5px;border:1px solid #8a8a8a;border-radius:3px;background:linear-gradient(#f4f4f4 0,#ececec 45%,#dedede 55%,#d6d6d6 100%);"></div>
<svg class="b" style="left:1061px;top:506px" width="16" height="16"><circle cx="8" cy="8" r="6.6" fill="#d42a3c" stroke="#a8a0a0" stroke-width="0.8"/><path d="M5.6 5.6L10.4 10.4M10.4 5.6L5.6 10.4" stroke="#fff" stroke-width="2"/></svg>
<div class="t" style="left:1092.3px;top:508.78px;font-size:12.9px;line-height:12.9px;color:#111;font-weight:normal;">Выключено</div>
<div class="b" style="left:912.5px;top:548.75px;width:252.75px;height:40.25px;border:3px solid #16468c;background:#f0f0f0;"></div>
<div class="t" style="left:932.5px;top:567.13px;font-size:12.6px;line-height:12.6px;color:#111;font-weight:normal;">Пауза</div>
<div class="b" style="left:974.5px;top:564.5px;width:5.5px;height:13.5px;background:linear-gradient(90deg,#a01818,#f03030 45%,#b01010);"></div>
<div class="b" style="left:982px;top:564.5px;width:5.5px;height:13.5px;background:linear-gradient(90deg,#a01818,#f03030 45%,#b01010);"></div>
<div class="t" style="left:1016.3px;top:567.13px;font-size:12.6px;line-height:12.6px;color:#111;font-weight:normal;">Уже</div>
<svg class="b" style="left:1047px;top:564px" width="21" height="15"><path d="M0.5 0.5L9 7.5L0.5 14.5Z" fill="#505050"/><path d="M20 0.5L11.5 7.5L20 14.5Z" fill="#606060"/></svg>
<div class="t" style="left:1091.3px;top:567.13px;font-size:12.6px;line-height:12.6px;color:#111;font-weight:normal;">Шире</div>
<svg class="b" style="left:1131px;top:564px" width="21" height="15"><path d="M9 0.5L0.5 7.5L9 14.5Z" fill="#606060"/><path d="M11.5 0.5L20 7.5L11.5 14.5Z" fill="#505050"/></svg>
<div class="b" style="left:1px;top:615px;width:1199px;height:1px;background:#d0d0d0"></div>
<div class="b" style="left:0;top:616px;width:1200px;height:23px;background:#f0f0f0"></div>
<div class="b" style="left:233.5px;top:617px;width:1px;height:22px;background:#d6d6d6"></div>
<div class="b" style="left:925px;top:617px;width:1px;height:22px;background:#d6d6d6"></div>
<div class="b" style="left:1077px;top:617px;width:1px;height:22px;background:#d6d6d6"></div>
<div class="b" style="left:1130px;top:617px;width:1px;height:22px;background:#d6d6d6"></div>
<div class="t" style="left:5px;top:622.32px;font-size:13.8px;line-height:13.8px;color:#222;font-weight:normal;">Открыт порт COM4</div>
<div class="t" style="left:237px;top:622.49px;font-size:13.6px;line-height:13.6px;color:#222;font-weight:normal;">Данные получены</div>
<div class="t" style="left:929px;top:622.66px;font-size:13.4px;line-height:13.4px;color:#111;font-weight:normal;">202мс | 0:4:38,134с</div>
<div class="t" style="left:1080px;top:622.66px;font-size:13.4px;line-height:13.4px;color:#111;font-weight:normal;">K-Line</div>
<div class="t" style="left:1136px;top:622.66px;font-size:13.4px;line-height:13.4px;color:#111;font-weight:normal;">Допуски</div>
</body></html>
